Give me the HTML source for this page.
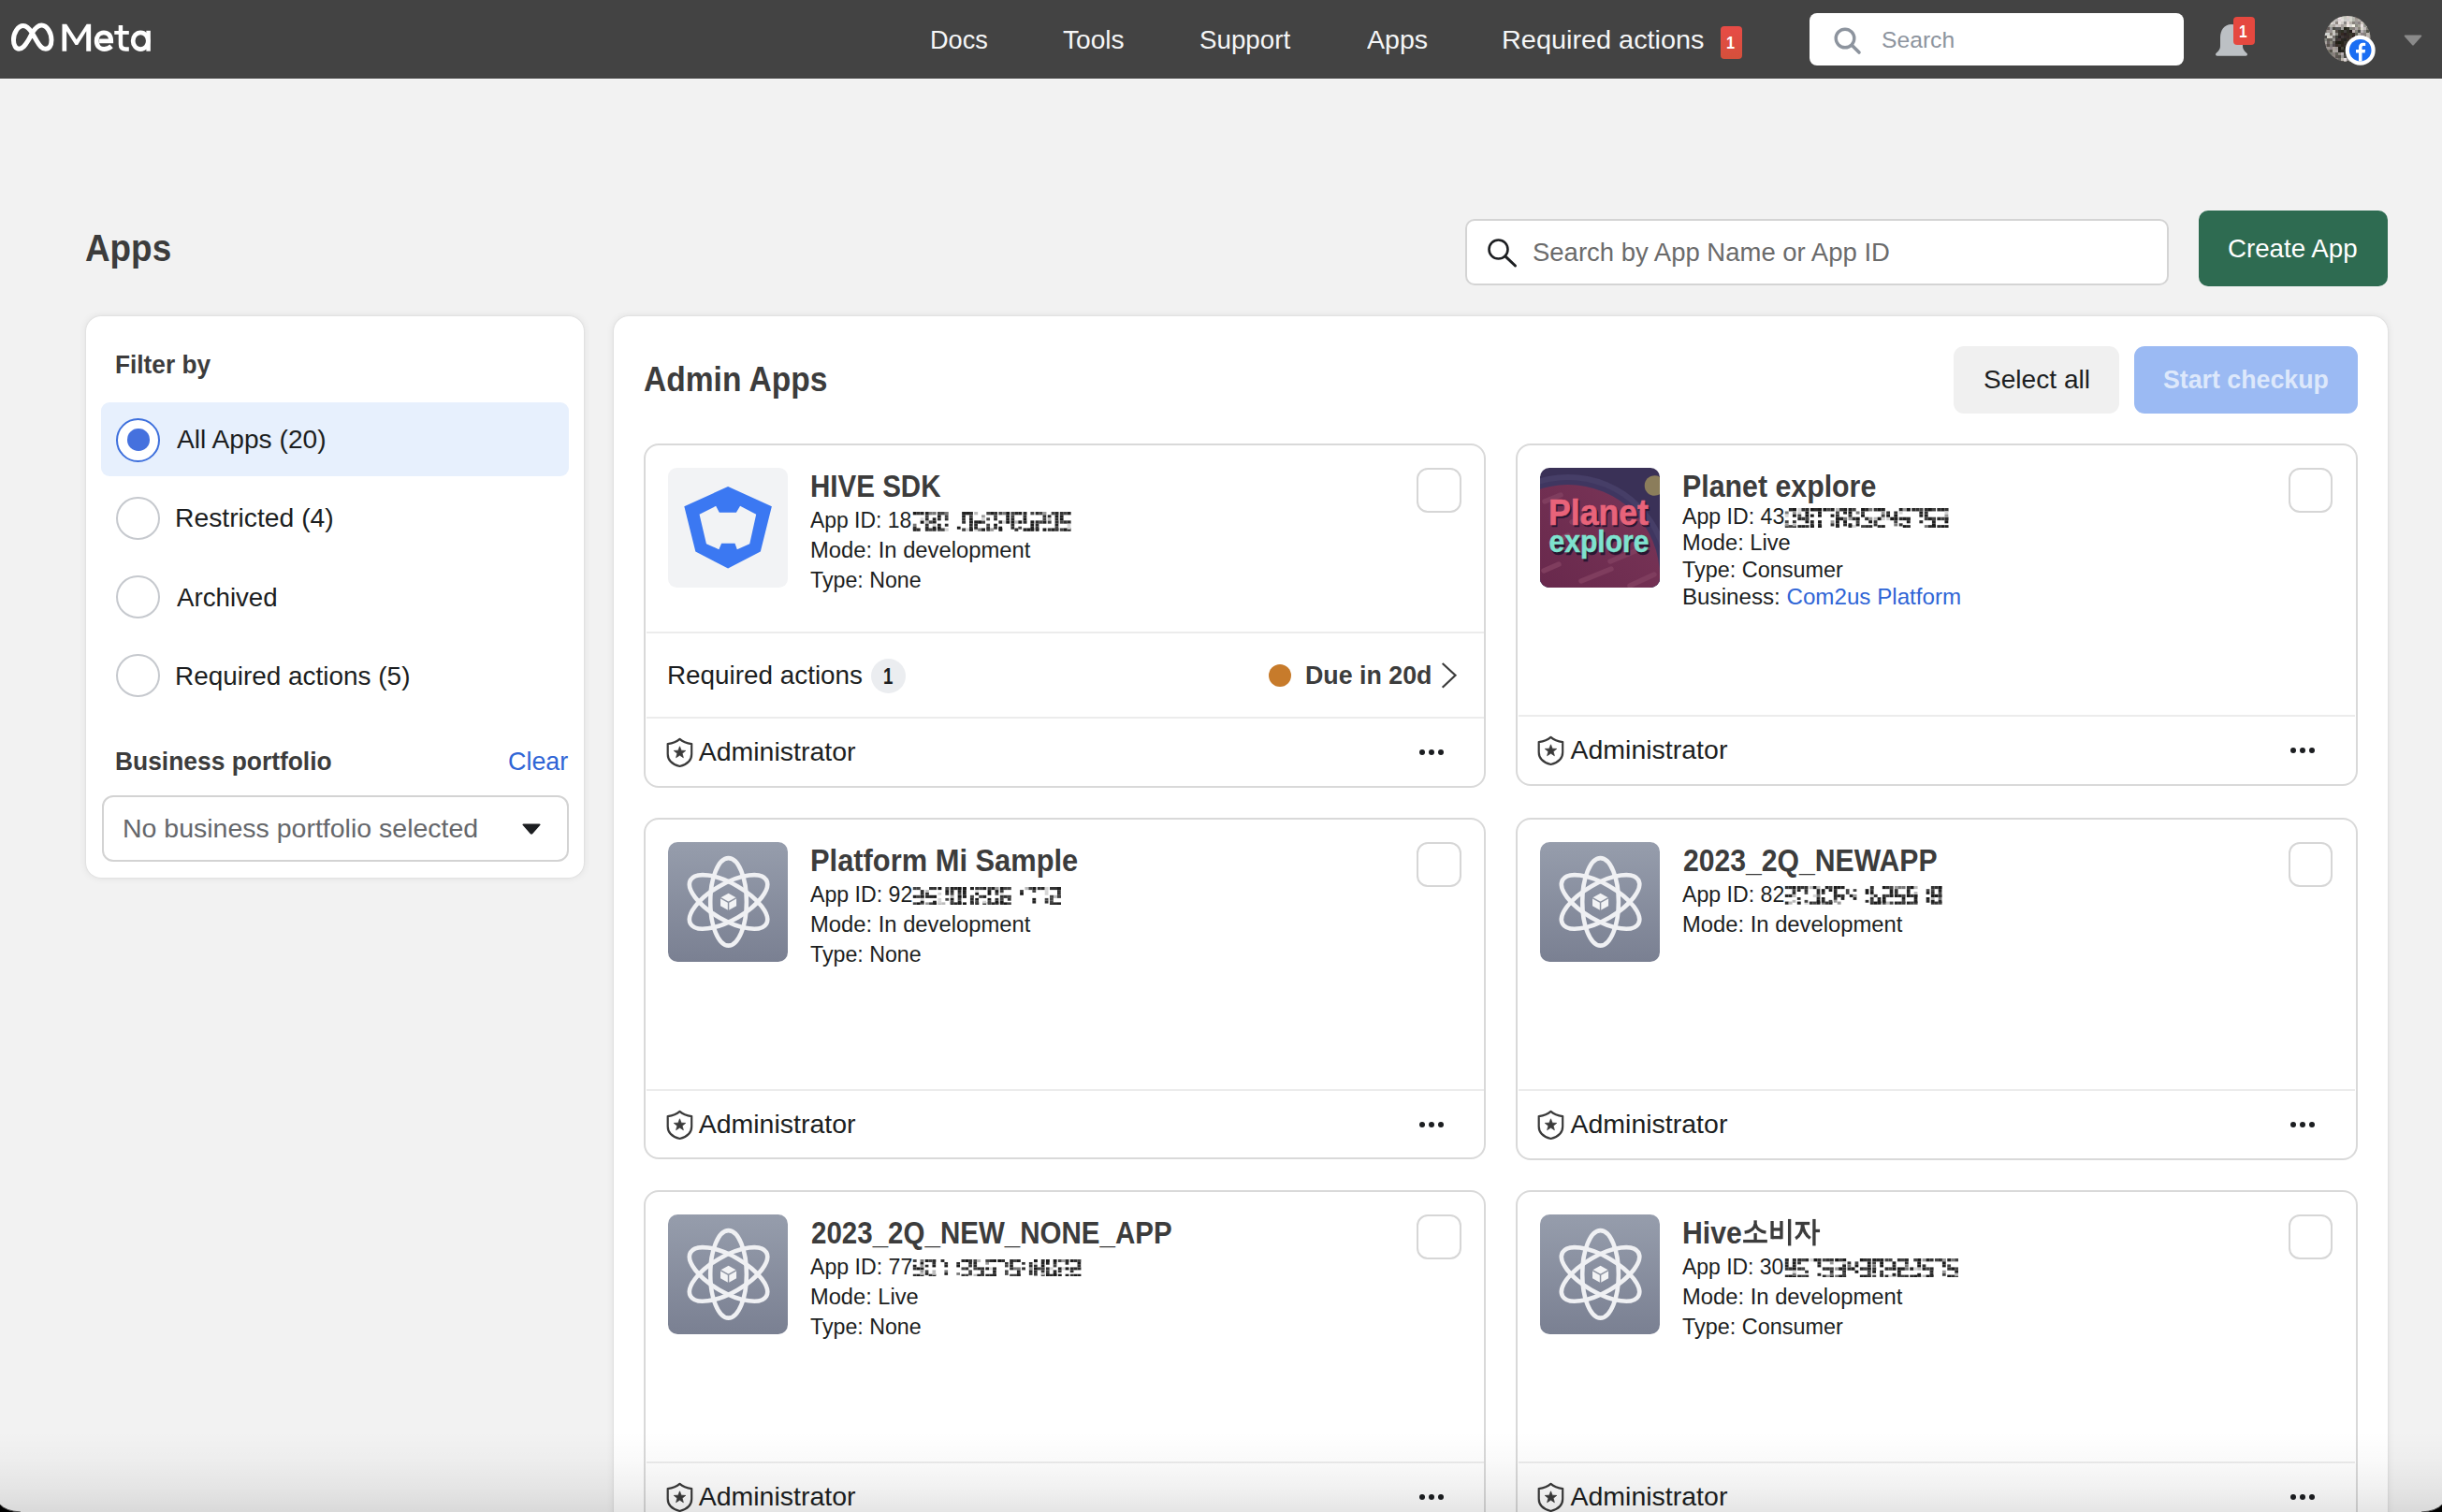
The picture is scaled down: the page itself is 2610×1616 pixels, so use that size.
<!DOCTYPE html>
<html><head><meta charset="utf-8"><title>Apps - Meta for Developers</title>
<style>
html,body{margin:0;padding:0;width:2610px;height:1616px;overflow:hidden;background:#f2f2f2;font-family:"Liberation Sans",sans-serif}
.a{position:absolute}
.t{position:absolute;white-space:nowrap;font-family:"Liberation Sans",sans-serif}
</style></head><body>
<div id='root' style='position:absolute;left:0;top:0;width:2610px;height:1616px;overflow:hidden;background:#f2f2f2'>
<div class='a' style='left:0px;top:0px;width:2610px;height:84px;background:#434343'></div>
<svg class='a' style='left:8px;top:18px' width='60' height='44' viewBox='0 0 2062 1512'>
<path d='M905 600 C800 430 700 330 580 330 C380 330 222 600 222 850 C222 1050 310 1178 420 1178 C560 1178 650 1050 760 870 C840 740 870 660 905 600 C1000 440 1110 312 1250 312 C1460 312 1615 600 1615 850 C1615 1060 1530 1178 1400 1178 C1260 1178 1180 1060 1080 890 C1000 760 960 680 905 600 Z' fill='none' stroke='#fff' stroke-width='172' stroke-linejoin='round'/>
</svg>
<svg class='a' style='left:62px;top:20px' width='104' height='40' viewBox='0 0 2442 939'>
<path d='M105 135 L215 135 L465 525 L720 135 L825 135 L825 815 L710 815 L710 310 L495 655 L435 655 L215 310 L215 815 L105 815 Z' fill='#fff'/>
<path d='M1035 560 L1330 560 C1330 415 1255 348 1150 348 C1030 348 968 445 968 557 C968 685 1045 762 1160 762 C1245 762 1300 728 1340 690' fill='none' stroke='#fff' stroke-width='115'/>
<path d='M1572 165 L1572 640 C1572 730 1620 762 1700 762 L1780 762' fill='none' stroke='#fff' stroke-width='105'/>
<path d='M1415 350 L1780 350' fill='none' stroke='#fff' stroke-width='90'/>
<ellipse cx='2072' cy='557' rx='190' ry='208' fill='none' stroke='#fff' stroke-width='112'/>
<path d='M2268 300 L2268 815' fill='none' stroke='#fff' stroke-width='105'/>
</svg>
<div class='t' style='left:993.80px;top:28.20px;font-size:28.3px;line-height:28.3px;font-weight:400;color:#f5f6f7;transform:scaleX(0.9599);transform-origin:0 0;'>Docs</div>
<div class='t' style='left:1135.91px;top:28.20px;font-size:28.3px;line-height:28.3px;font-weight:400;color:#f5f6f7;transform:scaleX(0.9937);transform-origin:0 0;'>Tools</div>
<div class='t' style='left:1281.72px;top:28.20px;font-size:28.3px;line-height:28.3px;font-weight:400;color:#f5f6f7;transform:scaleX(0.9796);transform-origin:0 0;'>Support</div>
<div class='t' style='left:1460.70px;top:28.20px;font-size:28.3px;line-height:28.3px;font-weight:400;color:#f5f6f7;transform:scaleX(1.0094);transform-origin:0 0;'>Apps</div>
<div class='t' style='left:1605.36px;top:28.20px;font-size:28.3px;line-height:28.3px;font-weight:400;color:#f5f6f7;transform:scaleX(1.0195);transform-origin:0 0;'>Required actions</div>
<div class='a' style='left:1839px;top:28px;width:23px;height:35px;background:linear-gradient(#e84b46,#d4503b);border-radius:4px'></div>
<div class='t' style='left:1844.74px;top:35.80px;font-size:19px;line-height:19px;font-weight:700;color:#fff;transform:scaleX(0.8556);transform-origin:0 0;'>1</div>
<div class='a' style='left:1934px;top:14px;width:400px;height:56px;background:#fff;border-radius:8px'></div>
<svg class='a' style='left:1956.5px;top:26px' width='36' height='36' viewBox='0 0 36 36'>
<circle cx='15' cy='15' r='9.8' fill='none' stroke='#8d949e' stroke-width='3.4'/>
<line x1='22.2' y1='22.2' x2='30' y2='30' stroke='#8d949e' stroke-width='3.6' stroke-linecap='round'/></svg>
<div class='t' style='left:2011.40px;top:30.80px;font-size:24.5px;line-height:24.5px;font-weight:400;color:#8d949e;transform:scaleX(1.0072);transform-origin:0 0;'>Search</div>
<svg class='a' style='left:2360px;top:18px' width='50' height='48' viewBox='0 0 50 48'>
<path d='M25 8 C17 8 13 14.5 13 22 L13 31 C13 35 10.5 37 8.5 39 C7.5 40 8 41.8 10 41.8 L40 41.8 C42 41.8 42.5 40 41.5 39 C39.5 37 37 35 37 31 L37 22 C37 14.5 33 8 25 8 Z' fill='#bcc0c4'/></svg>
<div class='a' style='left:2387px;top:18px;width:23px;height:30px;background:#e5483f;border-radius:4px'></div>
<div class='t' style='left:2393.38px;top:23.60px;font-size:19px;line-height:19px;font-weight:700;color:#fff;transform:scaleX(0.8222);transform-origin:0 0;'>1</div>
<svg class='a' style='left:2480px;top:14px' width='66' height='62' viewBox='0 0 66 62'><defs><clipPath id='av'><circle cx='29' cy='27.5' r='24.5'/></clipPath></defs><g clip-path='url(#av)'><rect x='0' y='0' width='60' height='60' fill='#6a625c'/><rect x='4.0' y='15.0' width='3.2' height='3.2' fill='rgb(98,98,95)'/><rect x='4.0' y='18.0' width='3.2' height='3.2' fill='rgb(129,124,117)'/><rect x='4.0' y='21.0' width='3.2' height='3.2' fill='rgb(210,211,209)'/><rect x='4.0' y='24.0' width='3.2' height='3.2' fill='rgb(78,76,74)'/><rect x='4.0' y='27.0' width='3.2' height='3.2' fill='rgb(134,138,131)'/><rect x='4.0' y='30.0' width='3.2' height='3.2' fill='rgb(169,163,158)'/><rect x='4.0' y='33.0' width='3.2' height='3.2' fill='rgb(131,123,125)'/><rect x='4.0' y='36.0' width='3.2' height='3.2' fill='rgb(165,160,155)'/><rect x='7.0' y='12.0' width='3.2' height='3.2' fill='rgb(152,150,148)'/><rect x='7.0' y='15.0' width='3.2' height='3.2' fill='rgb(99,90,88)'/><rect x='7.0' y='18.0' width='3.2' height='3.2' fill='rgb(162,154,151)'/><rect x='7.0' y='21.0' width='3.2' height='3.2' fill='rgb(208,209,206)'/><rect x='7.0' y='24.0' width='3.2' height='3.2' fill='rgb(215,212,202)'/><rect x='7.0' y='27.0' width='3.2' height='3.2' fill='rgb(95,90,84)'/><rect x='7.0' y='30.0' width='3.2' height='3.2' fill='rgb(103,96,96)'/><rect x='7.0' y='33.0' width='3.2' height='3.2' fill='rgb(88,82,75)'/><rect x='7.0' y='36.0' width='3.2' height='3.2' fill='rgb(156,149,146)'/><rect x='7.0' y='39.0' width='3.2' height='3.2' fill='rgb(118,115,105)'/><rect x='7.0' y='42.0' width='3.2' height='3.2' fill='rgb(153,150,144)'/><rect x='10.0' y='9.0' width='3.2' height='3.2' fill='rgb(226,221,216)'/><rect x='10.0' y='12.0' width='3.2' height='3.2' fill='rgb(182,182,175)'/><rect x='10.0' y='15.0' width='3.2' height='3.2' fill='rgb(153,152,153)'/><rect x='10.0' y='18.0' width='3.2' height='3.2' fill='rgb(156,150,149)'/><rect x='10.0' y='21.0' width='3.2' height='3.2' fill='rgb(129,123,114)'/><rect x='10.0' y='24.0' width='3.2' height='3.2' fill='rgb(203,200,195)'/><rect x='10.0' y='27.0' width='3.2' height='3.2' fill='rgb(105,102,95)'/><rect x='10.0' y='30.0' width='3.2' height='3.2' fill='rgb(142,140,129)'/><rect x='10.0' y='33.0' width='3.2' height='3.2' fill='rgb(126,120,119)'/><rect x='10.0' y='36.0' width='3.2' height='3.2' fill='rgb(142,132,135)'/><rect x='10.0' y='39.0' width='3.2' height='3.2' fill='rgb(86,82,74)'/><rect x='10.0' y='42.0' width='3.2' height='3.2' fill='rgb(125,126,118)'/><rect x='10.0' y='45.0' width='3.2' height='3.2' fill='rgb(153,150,142)'/><rect x='13.0' y='6.0' width='3.2' height='3.2' fill='rgb(200,197,190)'/><rect x='13.0' y='9.0' width='3.2' height='3.2' fill='rgb(202,199,197)'/><rect x='13.0' y='12.0' width='3.2' height='3.2' fill='rgb(173,165,160)'/><rect x='13.0' y='15.0' width='3.2' height='3.2' fill='rgb(74,74,68)'/><rect x='13.0' y='18.0' width='3.2' height='3.2' fill='rgb(200,199,189)'/><rect x='13.0' y='21.0' width='3.2' height='3.2' fill='rgb(202,197,194)'/><rect x='13.0' y='24.0' width='3.2' height='3.2' fill='rgb(119,115,111)'/><rect x='13.0' y='27.0' width='3.2' height='3.2' fill='rgb(151,149,146)'/><rect x='13.0' y='30.0' width='3.2' height='3.2' fill='rgb(89,84,81)'/><rect x='13.0' y='33.0' width='3.2' height='3.2' fill='rgb(80,74,76)'/><rect x='13.0' y='36.0' width='3.2' height='3.2' fill='rgb(170,160,155)'/><rect x='13.0' y='39.0' width='3.2' height='3.2' fill='rgb(170,166,158)'/><rect x='13.0' y='42.0' width='3.2' height='3.2' fill='rgb(138,128,126)'/><rect x='13.0' y='45.0' width='3.2' height='3.2' fill='rgb(143,136,129)'/><rect x='13.0' y='48.0' width='3.2' height='3.2' fill='rgb(169,166,160)'/><rect x='16.0' y='3.0' width='3.2' height='3.2' fill='rgb(220,218,207)'/><rect x='16.0' y='6.0' width='3.2' height='3.2' fill='rgb(188,186,184)'/><rect x='16.0' y='9.0' width='3.2' height='3.2' fill='rgb(143,134,129)'/><rect x='16.0' y='12.0' width='3.2' height='3.2' fill='rgb(203,199,200)'/><rect x='16.0' y='15.0' width='3.2' height='3.2' fill='rgb(88,87,87)'/><rect x='16.0' y='18.0' width='3.2' height='3.2' fill='rgb(83,75,70)'/><rect x='16.0' y='21.0' width='3.2' height='3.2' fill='rgb(134,133,127)'/><rect x='16.0' y='24.0' width='3.2' height='3.2' fill='rgb(61,62,56)'/><rect x='16.0' y='27.0' width='3.2' height='3.2' fill='rgb(61,54,54)'/><rect x='16.0' y='30.0' width='3.2' height='3.2' fill='rgb(37,32,25)'/><rect x='16.0' y='33.0' width='3.2' height='3.2' fill='rgb(58,47,41)'/><rect x='16.0' y='36.0' width='3.2' height='3.2' fill='rgb(154,149,147)'/><rect x='16.0' y='39.0' width='3.2' height='3.2' fill='rgb(168,160,160)'/><rect x='16.0' y='42.0' width='3.2' height='3.2' fill='rgb(97,98,87)'/><rect x='16.0' y='45.0' width='3.2' height='3.2' fill='rgb(93,85,83)'/><rect x='16.0' y='48.0' width='3.2' height='3.2' fill='rgb(132,126,122)'/><rect x='19.0' y='3.0' width='3.2' height='3.2' fill='rgb(241,230,233)'/><rect x='19.0' y='6.0' width='3.2' height='3.2' fill='rgb(221,209,212)'/><rect x='19.0' y='9.0' width='3.2' height='3.2' fill='rgb(229,224,220)'/><rect x='19.0' y='12.0' width='3.2' height='3.2' fill='rgb(199,191,186)'/><rect x='19.0' y='15.0' width='3.2' height='3.2' fill='rgb(87,87,85)'/><rect x='19.0' y='18.0' width='3.2' height='3.2' fill='rgb(53,52,45)'/><rect x='19.0' y='21.0' width='3.2' height='3.2' fill='rgb(60,55,50)'/><rect x='19.0' y='24.0' width='3.2' height='3.2' fill='rgb(41,36,37)'/><rect x='19.0' y='27.0' width='3.2' height='3.2' fill='rgb(70,58,57)'/><rect x='19.0' y='30.0' width='3.2' height='3.2' fill='rgb(28,31,20)'/><rect x='19.0' y='33.0' width='3.2' height='3.2' fill='rgb(60,54,50)'/><rect x='19.0' y='36.0' width='3.2' height='3.2' fill='rgb(32,27,21)'/><rect x='19.0' y='39.0' width='3.2' height='3.2' fill='rgb(32,31,28)'/><rect x='19.0' y='42.0' width='3.2' height='3.2' fill='rgb(145,138,133)'/><rect x='19.0' y='45.0' width='3.2' height='3.2' fill='rgb(86,84,75)'/><rect x='19.0' y='48.0' width='3.2' height='3.2' fill='rgb(106,104,100)'/><rect x='19.0' y='51.0' width='3.2' height='3.2' fill='rgb(109,101,93)'/><rect x='22.0' y='3.0' width='3.2' height='3.2' fill='rgb(216,215,207)'/><rect x='22.0' y='6.0' width='3.2' height='3.2' fill='rgb(227,222,219)'/><rect x='22.0' y='9.0' width='3.2' height='3.2' fill='rgb(210,206,201)'/><rect x='22.0' y='12.0' width='3.2' height='3.2' fill='rgb(165,157,155)'/><rect x='22.0' y='15.0' width='3.2' height='3.2' fill='rgb(160,158,154)'/><rect x='22.0' y='18.0' width='3.2' height='3.2' fill='rgb(45,46,35)'/><rect x='22.0' y='21.0' width='3.2' height='3.2' fill='rgb(52,40,34)'/><rect x='22.0' y='24.0' width='3.2' height='3.2' fill='rgb(64,57,58)'/><rect x='22.0' y='27.0' width='3.2' height='3.2' fill='rgb(42,38,33)'/><rect x='22.0' y='30.0' width='3.2' height='3.2' fill='rgb(38,34,25)'/><rect x='22.0' y='33.0' width='3.2' height='3.2' fill='rgb(43,37,28)'/><rect x='22.0' y='36.0' width='3.2' height='3.2' fill='rgb(69,69,58)'/><rect x='22.0' y='39.0' width='3.2' height='3.2' fill='rgb(41,38,31)'/><rect x='22.0' y='42.0' width='3.2' height='3.2' fill='rgb(182,174,178)'/><rect x='22.0' y='45.0' width='3.2' height='3.2' fill='rgb(157,155,153)'/><rect x='22.0' y='48.0' width='3.2' height='3.2' fill='rgb(191,185,175)'/><rect x='22.0' y='51.0' width='3.2' height='3.2' fill='rgb(73,69,70)'/><rect x='25.0' y='3.0' width='3.2' height='3.2' fill='rgb(199,200,190)'/><rect x='25.0' y='6.0' width='3.2' height='3.2' fill='rgb(202,202,198)'/><rect x='25.0' y='9.0' width='3.2' height='3.2' fill='rgb(139,136,135)'/><rect x='25.0' y='12.0' width='3.2' height='3.2' fill='rgb(178,174,165)'/><rect x='25.0' y='15.0' width='3.2' height='3.2' fill='rgb(36,35,25)'/><rect x='25.0' y='18.0' width='3.2' height='3.2' fill='rgb(66,63,62)'/><rect x='25.0' y='21.0' width='3.2' height='3.2' fill='rgb(42,32,34)'/><rect x='25.0' y='24.0' width='3.2' height='3.2' fill='rgb(52,45,42)'/><rect x='25.0' y='27.0' width='3.2' height='3.2' fill='rgb(36,37,35)'/><rect x='25.0' y='30.0' width='3.2' height='3.2' fill='rgb(58,54,48)'/><rect x='25.0' y='33.0' width='3.2' height='3.2' fill='rgb(51,46,44)'/><rect x='25.0' y='36.0' width='3.2' height='3.2' fill='rgb(29,28,21)'/><rect x='25.0' y='39.0' width='3.2' height='3.2' fill='rgb(43,42,37)'/><rect x='25.0' y='42.0' width='3.2' height='3.2' fill='rgb(63,61,52)'/><rect x='25.0' y='45.0' width='3.2' height='3.2' fill='rgb(78,77,75)'/><rect x='25.0' y='48.0' width='3.2' height='3.2' fill='rgb(222,214,217)'/><rect x='25.0' y='51.0' width='3.2' height='3.2' fill='rgb(186,182,175)'/><rect x='28.0' y='3.0' width='3.2' height='3.2' fill='rgb(215,204,201)'/><rect x='28.0' y='6.0' width='3.2' height='3.2' fill='rgb(206,203,203)'/><rect x='28.0' y='9.0' width='3.2' height='3.2' fill='rgb(226,216,212)'/><rect x='28.0' y='12.0' width='3.2' height='3.2' fill='rgb(241,232,228)'/><rect x='28.0' y='15.0' width='3.2' height='3.2' fill='rgb(53,53,43)'/><rect x='28.0' y='18.0' width='3.2' height='3.2' fill='rgb(46,45,37)'/><rect x='28.0' y='21.0' width='3.2' height='3.2' fill='rgb(50,45,38)'/><rect x='28.0' y='24.0' width='3.2' height='3.2' fill='rgb(51,41,40)'/><rect x='28.0' y='27.0' width='3.2' height='3.2' fill='rgb(57,49,42)'/><rect x='28.0' y='30.0' width='3.2' height='3.2' fill='rgb(65,63,53)'/><rect x='28.0' y='33.0' width='3.2' height='3.2' fill='rgb(29,25,22)'/><rect x='28.0' y='36.0' width='3.2' height='3.2' fill='rgb(57,55,45)'/><rect x='28.0' y='39.0' width='3.2' height='3.2' fill='rgb(56,57,46)'/><rect x='28.0' y='42.0' width='3.2' height='3.2' fill='rgb(36,35,27)'/><rect x='28.0' y='45.0' width='3.2' height='3.2' fill='rgb(156,154,145)'/><rect x='28.0' y='48.0' width='3.2' height='3.2' fill='rgb(152,148,147)'/><rect x='28.0' y='51.0' width='3.2' height='3.2' fill='rgb(76,75,69)'/><rect x='31.0' y='3.0' width='3.2' height='3.2' fill='rgb(209,211,202)'/><rect x='31.0' y='6.0' width='3.2' height='3.2' fill='rgb(213,212,203)'/><rect x='31.0' y='9.0' width='3.2' height='3.2' fill='rgb(184,179,171)'/><rect x='31.0' y='12.0' width='3.2' height='3.2' fill='rgb(218,215,212)'/><rect x='31.0' y='15.0' width='3.2' height='3.2' fill='rgb(128,130,119)'/><rect x='31.0' y='18.0' width='3.2' height='3.2' fill='rgb(36,27,27)'/><rect x='31.0' y='21.0' width='3.2' height='3.2' fill='rgb(56,57,44)'/><rect x='31.0' y='24.0' width='3.2' height='3.2' fill='rgb(66,59,51)'/><rect x='31.0' y='27.0' width='3.2' height='3.2' fill='rgb(72,66,56)'/><rect x='31.0' y='30.0' width='3.2' height='3.2' fill='rgb(55,56,46)'/><rect x='31.0' y='33.0' width='3.2' height='3.2' fill='rgb(44,41,33)'/><rect x='31.0' y='36.0' width='3.2' height='3.2' fill='rgb(59,56,49)'/><rect x='31.0' y='39.0' width='3.2' height='3.2' fill='rgb(33,28,25)'/><rect x='31.0' y='42.0' width='3.2' height='3.2' fill='rgb(160,159,154)'/><rect x='31.0' y='45.0' width='3.2' height='3.2' fill='rgb(107,104,99)'/><rect x='31.0' y='48.0' width='3.2' height='3.2' fill='rgb(112,106,103)'/><rect x='31.0' y='51.0' width='3.2' height='3.2' fill='rgb(179,178,167)'/><rect x='34.0' y='3.0' width='3.2' height='3.2' fill='rgb(183,182,177)'/><rect x='34.0' y='6.0' width='3.2' height='3.2' fill='rgb(179,181,172)'/><rect x='34.0' y='9.0' width='3.2' height='3.2' fill='rgb(135,130,124)'/><rect x='34.0' y='12.0' width='3.2' height='3.2' fill='rgb(245,243,231)'/><rect x='34.0' y='15.0' width='3.2' height='3.2' fill='rgb(133,125,122)'/><rect x='34.0' y='18.0' width='3.2' height='3.2' fill='rgb(188,177,175)'/><rect x='34.0' y='21.0' width='3.2' height='3.2' fill='rgb(52,44,39)'/><rect x='34.0' y='24.0' width='3.2' height='3.2' fill='rgb(41,29,27)'/><rect x='34.0' y='27.0' width='3.2' height='3.2' fill='rgb(62,59,52)'/><rect x='34.0' y='30.0' width='3.2' height='3.2' fill='rgb(54,55,50)'/><rect x='34.0' y='33.0' width='3.2' height='3.2' fill='rgb(32,30,23)'/><rect x='34.0' y='36.0' width='3.2' height='3.2' fill='rgb(45,39,33)'/><rect x='34.0' y='39.0' width='3.2' height='3.2' fill='rgb(171,169,163)'/><rect x='34.0' y='42.0' width='3.2' height='3.2' fill='rgb(97,86,82)'/><rect x='34.0' y='45.0' width='3.2' height='3.2' fill='rgb(88,82,73)'/><rect x='34.0' y='48.0' width='3.2' height='3.2' fill='rgb(87,83,84)'/><rect x='34.0' y='51.0' width='3.2' height='3.2' fill='rgb(121,119,118)'/><rect x='37.0' y='3.0' width='3.2' height='3.2' fill='rgb(153,143,137)'/><rect x='37.0' y='6.0' width='3.2' height='3.2' fill='rgb(164,157,152)'/><rect x='37.0' y='9.0' width='3.2' height='3.2' fill='rgb(152,149,147)'/><rect x='37.0' y='12.0' width='3.2' height='3.2' fill='rgb(143,143,134)'/><rect x='37.0' y='15.0' width='3.2' height='3.2' fill='rgb(172,165,165)'/><rect x='37.0' y='18.0' width='3.2' height='3.2' fill='rgb(133,132,122)'/><rect x='37.0' y='21.0' width='3.2' height='3.2' fill='rgb(100,101,92)'/><rect x='37.0' y='24.0' width='3.2' height='3.2' fill='rgb(184,176,171)'/><rect x='37.0' y='27.0' width='3.2' height='3.2' fill='rgb(157,159,150)'/><rect x='37.0' y='30.0' width='3.2' height='3.2' fill='rgb(103,98,87)'/><rect x='37.0' y='33.0' width='3.2' height='3.2' fill='rgb(189,189,185)'/><rect x='37.0' y='36.0' width='3.2' height='3.2' fill='rgb(207,207,196)'/><rect x='37.0' y='39.0' width='3.2' height='3.2' fill='rgb(195,189,184)'/><rect x='37.0' y='42.0' width='3.2' height='3.2' fill='rgb(133,132,125)'/><rect x='37.0' y='45.0' width='3.2' height='3.2' fill='rgb(139,134,127)'/><rect x='37.0' y='48.0' width='3.2' height='3.2' fill='rgb(84,78,75)'/><rect x='40.0' y='3.0' width='3.2' height='3.2' fill='rgb(195,193,188)'/><rect x='40.0' y='6.0' width='3.2' height='3.2' fill='rgb(177,173,165)'/><rect x='40.0' y='9.0' width='3.2' height='3.2' fill='rgb(139,130,130)'/><rect x='40.0' y='12.0' width='3.2' height='3.2' fill='rgb(166,163,152)'/><rect x='40.0' y='15.0' width='3.2' height='3.2' fill='rgb(138,134,124)'/><rect x='40.0' y='18.0' width='3.2' height='3.2' fill='rgb(75,74,71)'/><rect x='40.0' y='21.0' width='3.2' height='3.2' fill='rgb(176,173,163)'/><rect x='40.0' y='24.0' width='3.2' height='3.2' fill='rgb(223,221,210)'/><rect x='40.0' y='27.0' width='3.2' height='3.2' fill='rgb(210,207,197)'/><rect x='40.0' y='30.0' width='3.2' height='3.2' fill='rgb(159,157,150)'/><rect x='40.0' y='33.0' width='3.2' height='3.2' fill='rgb(152,147,147)'/><rect x='40.0' y='36.0' width='3.2' height='3.2' fill='rgb(124,116,111)'/><rect x='40.0' y='39.0' width='3.2' height='3.2' fill='rgb(120,116,110)'/><rect x='40.0' y='42.0' width='3.2' height='3.2' fill='rgb(148,140,139)'/><rect x='40.0' y='45.0' width='3.2' height='3.2' fill='rgb(123,118,114)'/><rect x='40.0' y='48.0' width='3.2' height='3.2' fill='rgb(119,111,107)'/><rect x='43.0' y='6.0' width='3.2' height='3.2' fill='rgb(150,142,146)'/><rect x='43.0' y='9.0' width='3.2' height='3.2' fill='rgb(204,198,190)'/><rect x='43.0' y='12.0' width='3.2' height='3.2' fill='rgb(233,223,226)'/><rect x='43.0' y='15.0' width='3.2' height='3.2' fill='rgb(220,219,209)'/><rect x='43.0' y='18.0' width='3.2' height='3.2' fill='rgb(187,180,182)'/><rect x='43.0' y='21.0' width='3.2' height='3.2' fill='rgb(141,131,133)'/><rect x='43.0' y='24.0' width='3.2' height='3.2' fill='rgb(179,169,163)'/><rect x='43.0' y='27.0' width='3.2' height='3.2' fill='rgb(85,81,74)'/><rect x='43.0' y='30.0' width='3.2' height='3.2' fill='rgb(148,146,146)'/><rect x='43.0' y='33.0' width='3.2' height='3.2' fill='rgb(218,211,204)'/><rect x='43.0' y='36.0' width='3.2' height='3.2' fill='rgb(174,170,163)'/><rect x='43.0' y='39.0' width='3.2' height='3.2' fill='rgb(226,220,211)'/><rect x='43.0' y='42.0' width='3.2' height='3.2' fill='rgb(86,84,75)'/><rect x='43.0' y='45.0' width='3.2' height='3.2' fill='rgb(128,121,122)'/><rect x='46.0' y='9.0' width='3.2' height='3.2' fill='rgb(162,164,159)'/><rect x='46.0' y='12.0' width='3.2' height='3.2' fill='rgb(150,152,143)'/><rect x='46.0' y='15.0' width='3.2' height='3.2' fill='rgb(194,186,187)'/><rect x='46.0' y='18.0' width='3.2' height='3.2' fill='rgb(147,146,142)'/><rect x='46.0' y='21.0' width='3.2' height='3.2' fill='rgb(133,128,123)'/><rect x='46.0' y='24.0' width='3.2' height='3.2' fill='rgb(107,98,89)'/><rect x='46.0' y='27.0' width='3.2' height='3.2' fill='rgb(112,106,107)'/><rect x='46.0' y='30.0' width='3.2' height='3.2' fill='rgb(87,85,76)'/><rect x='46.0' y='33.0' width='3.2' height='3.2' fill='rgb(219,218,214)'/><rect x='46.0' y='36.0' width='3.2' height='3.2' fill='rgb(193,191,185)'/><rect x='46.0' y='39.0' width='3.2' height='3.2' fill='rgb(206,201,191)'/><rect x='46.0' y='42.0' width='3.2' height='3.2' fill='rgb(90,92,85)'/><rect x='49.0' y='12.0' width='3.2' height='3.2' fill='rgb(211,203,206)'/><rect x='49.0' y='15.0' width='3.2' height='3.2' fill='rgb(128,128,119)'/><rect x='49.0' y='18.0' width='3.2' height='3.2' fill='rgb(82,83,72)'/><rect x='49.0' y='21.0' width='3.2' height='3.2' fill='rgb(187,181,174)'/><rect x='49.0' y='24.0' width='3.2' height='3.2' fill='rgb(188,178,174)'/><rect x='49.0' y='27.0' width='3.2' height='3.2' fill='rgb(165,160,154)'/><rect x='49.0' y='30.0' width='3.2' height='3.2' fill='rgb(98,97,90)'/><rect x='49.0' y='33.0' width='3.2' height='3.2' fill='rgb(200,198,188)'/><rect x='49.0' y='36.0' width='3.2' height='3.2' fill='rgb(86,76,74)'/><rect x='49.0' y='39.0' width='3.2' height='3.2' fill='rgb(139,131,128)'/><rect x='52.0' y='18.0' width='3.2' height='3.2' fill='rgb(201,205,194)'/><rect x='52.0' y='21.0' width='3.2' height='3.2' fill='rgb(175,174,167)'/><rect x='52.0' y='24.0' width='3.2' height='3.2' fill='rgb(169,165,162)'/><rect x='52.0' y='27.0' width='3.2' height='3.2' fill='rgb(126,126,120)'/><rect x='52.0' y='30.0' width='3.2' height='3.2' fill='rgb(150,146,142)'/><rect x='52.0' y='33.0' width='3.2' height='3.2' fill='rgb(80,75,73)'/><rect x='52.0' y='36.0' width='3.2' height='3.2' fill='rgb(211,215,205)'/></g><circle cx='42.7' cy='39.7' r='16' fill='#fff'/><circle cx='42.7' cy='39.7' r='11.8' fill='#1b6ef3'/><path d='M44.5 51.5 L44.5 42.5 L47.6 42.5 L48.1 39 L44.5 39 L44.5 36.8 C44.5 35.8 44.9 35.1 46.3 35.1 L48.2 35.1 L48.2 32 C47.8 31.9 46.7 31.8 45.6 31.8 C42.8 31.8 41 33.5 41 36.5 L41 39 L38 39 L38 42.5 L41 42.5 L41 51.5 Z' fill='#fff'/></svg>
<svg class='a' style='left:2568px;top:35px' width='22' height='16' viewBox='0 0 22 16'>
<path d='M2.5 2.5 L19.5 2.5 Q21 2.5 20 4 L12 13 Q11 14 10 13 L2 4 Q1 2.5 2.5 2.5 Z' fill='#8a8a8a'/></svg>
<div class='t' style='left:91.19px;top:244.70px;font-size:40.6px;line-height:40.6px;font-weight:700;color:#3c3c3c;transform:scaleX(0.9081);transform-origin:0 0;'>Apps</div>
<div class='a' style='left:1566px;top:234px;width:752px;height:71px;background:#fff;border:2px solid #d4d4d4;border-radius:10px;box-sizing:border-box'></div>
<svg class='a' style='left:1586px;top:252px' width='40' height='36' viewBox='0 0 40 36'>
<circle cx='15.5' cy='14.5' r='10' fill='none' stroke='#1c1e21' stroke-width='2.6'/>
<line x1='22.8' y1='21.8' x2='33.5' y2='32' stroke='#1c1e21' stroke-width='3' stroke-linecap='round'/></svg>
<div class='t' style='left:1637.64px;top:254.70px;font-size:28.5px;line-height:28.5px;font-weight:400;color:#6b6b6b;transform:scaleX(0.9642);transform-origin:0 0;'>Search by App Name or App ID</div>
<div class='a' style='left:2350px;top:225px;width:202px;height:81px;background:#2e6b51;border-radius:10px'></div>
<div class='t' style='left:2381.03px;top:251.00px;font-size:28.5px;line-height:28.5px;font-weight:400;color:#ffffff;transform:scaleX(0.9716);transform-origin:0 0;'>Create App</div>
<div class='a' style='left:92px;top:338px;width:532px;height:600px;background:#fff;border-radius:16px;box-shadow:0 0 9px rgba(0,0,0,0.09),0 0 2px rgba(0,0,0,0.10)'></div>
<div class='t' style='left:122.86px;top:374.90px;font-size:28.5px;line-height:28.5px;font-weight:700;color:#3c3c3c;transform:scaleX(0.9211);transform-origin:0 0;'>Filter by</div>
<div class='a' style='left:108px;top:430px;width:500px;height:79px;background:#e7f0fd;border-radius:9px'></div>
<div class='a' style='left:124px;top:446.5px;width:47px;height:47px;border-radius:50%;border:2.6px solid #3d6fdc;box-sizing:border-box;background:#fff'></div>
<div class='a' style='left:136px;top:458.2px;width:23.6px;height:23.6px;border-radius:50%;background:#4571de'></div>
<div class='a' style='left:124.3px;top:530.5px;width:46.6px;height:46.6px;border-radius:50%;border:2.2px solid #c6c9ce;box-sizing:border-box;background:#fff'></div>
<div class='a' style='left:124.3px;top:614.5px;width:46.6px;height:46.6px;border-radius:50%;border:2.2px solid #c6c9ce;box-sizing:border-box;background:#fff'></div>
<div class='a' style='left:124.3px;top:698.5px;width:46.6px;height:46.6px;border-radius:50%;border:2.2px solid #c6c9ce;box-sizing:border-box;background:#fff'></div>
<div class='t' style='left:189.00px;top:455.00px;font-size:28.5px;line-height:28.5px;font-weight:400;color:#1c1e21;transform:scaleX(0.9875);transform-origin:0 0;'>All Apps (20)</div>
<div class='t' style='left:187.32px;top:539.30px;font-size:28.5px;line-height:28.5px;font-weight:400;color:#1c1e21;transform:scaleX(0.9922);transform-origin:0 0;'>Restricted (4)</div>
<div class='t' style='left:189.30px;top:624.10px;font-size:28.5px;line-height:28.5px;font-weight:400;color:#1c1e21;transform:scaleX(0.9706);transform-origin:0 0;'>Archived</div>
<div class='t' style='left:187.34px;top:708.10px;font-size:28.5px;line-height:28.5px;font-weight:400;color:#1c1e21;transform:scaleX(0.9798);transform-origin:0 0;'>Required actions (5)</div>
<div class='t' style='left:122.95px;top:799.00px;font-size:28.5px;line-height:28.5px;font-weight:700;color:#3c3c3c;transform:scaleX(0.9259);transform-origin:0 0;'>Business portfolio</div>
<div class='t' style='left:543.36px;top:799.00px;font-size:28.5px;line-height:28.5px;font-weight:400;color:#2f65d6;transform:scaleX(0.9433);transform-origin:0 0;'>Clear</div>
<div class='a' style='left:109px;top:850px;width:499px;height:71px;background:#fff;border:2px solid #d3d3d3;border-radius:12px;box-sizing:border-box'></div>
<div class='t' style='left:130.99px;top:871.40px;font-size:28.5px;line-height:28.5px;font-weight:400;color:#65676b;'>No business portfolio selected</div>
<svg class='a' style='left:556px;top:878px' width='24' height='16' viewBox='0 0 24 16'>
<path d='M3.5 2.5 L20.5 2.5 Q22.5 2.5 21 4.3 L13.3 13 Q12 14.5 10.7 13 L3 4.3 Q1.5 2.5 3.5 2.5 Z' fill='#1c1e21'/></svg>
<div class='a' style='left:656px;top:338px;width:1896px;height:1362px;background:#fff;border-radius:16px;box-shadow:0 0 9px rgba(0,0,0,0.09),0 0 2px rgba(0,0,0,0.10)'></div>
<div class='t' style='left:687.98px;top:387.80px;font-size:36.6px;line-height:36.6px;font-weight:700;color:#3c3c3c;transform:scaleX(0.9175);transform-origin:0 0;'>Admin Apps</div>
<div class='a' style='left:2088px;top:370px;width:177px;height:72px;background:#f0f0f0;border-radius:11px'></div>
<div class='t' style='left:2119.61px;top:390.80px;font-size:28.5px;line-height:28.5px;font-weight:400;color:#1c1e21;transform:scaleX(0.9858);transform-origin:0 0;'>Select all</div>
<div class='a' style='left:2281px;top:370px;width:239px;height:72px;background:#9bbaf3;border-radius:11px'></div>
<div class='t' style='left:2311.56px;top:390.90px;font-size:28.5px;line-height:28.5px;font-weight:700;color:#dde8fb;transform:scaleX(0.9382);transform-origin:0 0;'>Start checkup</div>
<div class='a' style='left:688px;top:473.8px;width:900.1999999999998px;height:367.99999999999994px;background:#fff;border:2px solid #d9d9d9;border-radius:16px;box-sizing:border-box'></div>
<svg class='a' style='left:714px;top:500px' width='128' height='128' viewBox='43 55 1382 1380'>
<rect x='43' y='55' width='1382' height='1380' rx='100' fill='#f2f3f5'/>
<path fill='#3b78f2' fill-rule='evenodd' d='M735 270 L1240 500 L1110 1020 L735 1215 L360 1020 L230 500 Z M405 590 L595 495 L635 570 L830 570 L875 495 L1060 590 L985 930 L840 995 L815 925 L660 925 L630 995 L485 930 Z'/>
</svg>
<div class='t' style='left:866.28px;top:503.80px;font-size:32.5px;line-height:32.5px;font-weight:700;color:#3c3c3c;transform:scaleX(0.9086);transform-origin:0 0;'>HIVE SDK</div>
<div class='t' style='left:866.40px;top:543.80px;font-size:24.4px;line-height:24.4px;font-weight:400;color:#1c1e21;transform:scaleX(0.9386);transform-origin:0 0;'>App ID: 18</div>
<div class='t' style='left:866.25px;top:575.90px;font-size:24.4px;line-height:24.4px;font-weight:400;color:#1c1e21;transform:scaleX(0.9749);transform-origin:0 0;'>Mode: In development</div>
<div class='t' style='left:866.40px;top:608.00px;font-size:24.4px;line-height:24.4px;font-weight:400;color:#1c1e21;transform:scaleX(0.9508);transform-origin:0 0;'>Type: None</div>
<div class='a' style='left:1514.1px;top:500px;width:47.799999999999955px;height:48px;border:2px solid #d6d6d6;border-radius:12px;box-sizing:border-box;background:#fff'></div>
<div class='a' style='left:691px;top:675px;width:894.5999999999999px;height:2px;background:#ececec'></div>
<div class='t' style='left:713.05px;top:706.70px;font-size:28.5px;line-height:28.5px;font-weight:400;color:#1c1e21;transform:scaleX(0.9773);transform-origin:0 0;'>Required actions</div>
<div class='a' style='left:931px;top:703.5px;width:37px;height:37px;border-radius:50%;background:#ebedf0'></div>
<div class='t' style='left:943.69px;top:711.70px;font-size:23px;line-height:23px;font-weight:700;color:#1c1e21;transform:scaleX(0.8091);transform-origin:0 0;'>1</div>
<div class='a' style='left:1356px;top:710px;width:24px;height:24px;border-radius:50%;background:#c77b2b'></div>
<div class='t' style='left:1395.42px;top:707.00px;font-size:28.5px;line-height:28.5px;font-weight:700;color:#3c3c3c;transform:scaleX(0.9400);transform-origin:0 0;'>Due in 20d</div>
<svg class='a' style='left:1538px;top:706px' width='22' height='32' viewBox='0 0 22 32'><path d='M3.7 3 L17.5 15.8 L3.7 28.7' fill='none' stroke='#3c3c3c' stroke-width='2.2' stroke-linejoin='miter'/></svg>
<div class='a' style='left:691px;top:766px;width:894.5999999999999px;height:2px;background:#ececec'></div>
<svg class='a' style='left:710.5px;top:787.5px' width='32' height='36' viewBox='0 0 32 36'>
<path d='M15.5 1.8 C12.3 4.6 8.5 6.2 2.7 7.1 L2.7 17.9 C2.7 25 8 29 15.5 31 C23 29 28.2 25 28.2 17.9 L28.2 7.1 C22.5 6.2 18.7 4.6 15.5 1.8 Z' fill='none' stroke='#3a3a3a' stroke-width='2.2' stroke-linejoin='round'/>
<path d='M15.5 9.8 L17.15 14.13 L21.78 14.36 L18.16 17.27 L19.38 21.74 L15.5 19.2 L11.62 21.74 L12.84 17.27 L9.22 14.36 L13.85 14.13 Z' fill='#3a3a3a' stroke='#3a3a3a' stroke-width='0.7' stroke-linejoin='round'/>
</svg>
<div class='t' style='left:746.70px;top:788.75px;font-size:28.5px;line-height:28.5px;font-weight:400;color:#1c1e21;'>Administrator</div>
<div class='a' style='left:1516.8px;top:800.6px;width:6.2px;height:6.2px;border-radius:50%;background:#1c1e21'></div>
<div class='a' style='left:1526.8px;top:800.6px;width:6.2px;height:6.2px;border-radius:50%;background:#1c1e21'></div>
<div class='a' style='left:1536.8px;top:800.6px;width:6.2px;height:6.2px;border-radius:50%;background:#1c1e21'></div>
<svg class='a' style='left:974.9px;top:546.8px' width='170.1' height='20.8'><rect x='0.80' y='0.00' width='3.93' height='3.33' fill='#1a1a1a'/><rect x='4.73' y='0.00' width='3.93' height='3.33' fill='#333'/><rect x='8.65' y='0.00' width='3.93' height='3.33' fill='#222'/><rect x='8.65' y='9.36' width='3.93' height='3.33' fill='#1a1a1a'/><rect x='0.80' y='17.47' width='3.93' height='3.33' fill='#222'/><rect x='4.73' y='17.47' width='3.93' height='3.33' fill='#2b2b2b'/><rect x='8.65' y='6.34' width='3.73' height='3.02' fill='#d5d5d5'/><rect x='0.80' y='12.69' width='3.73' height='3.02' fill='#777'/><rect x='0.80' y='15.70' width='3.73' height='3.02' fill='#333'/><rect x='13.88' y='0.00' width='3.93' height='3.33' fill='#222'/><rect x='17.81' y='0.00' width='3.93' height='3.33' fill='#777'/><rect x='21.74' y='0.00' width='3.93' height='3.33' fill='#777'/><rect x='13.88' y='9.36' width='3.93' height='3.33' fill='#bbb'/><rect x='17.81' y='9.36' width='3.93' height='3.33' fill='#444'/><rect x='21.74' y='9.36' width='3.93' height='3.33' fill='#222'/><rect x='13.88' y='17.47' width='3.93' height='3.33' fill='#333'/><rect x='17.81' y='17.47' width='3.93' height='3.33' fill='#444'/><rect x='21.74' y='17.47' width='3.93' height='3.33' fill='#333'/><rect x='13.88' y='3.33' width='3.73' height='3.02' fill='#444'/><rect x='13.88' y='6.34' width='3.73' height='3.02' fill='#2b2b2b'/><rect x='21.74' y='6.34' width='3.73' height='3.02' fill='#222'/><rect x='13.88' y='12.69' width='3.73' height='3.02' fill='#333'/><rect x='13.88' y='15.70' width='3.73' height='3.02' fill='#2b2b2b'/><rect x='21.74' y='12.69' width='3.73' height='3.02' fill='#d5d5d5'/><rect x='21.74' y='15.70' width='3.73' height='3.02' fill='#222'/><rect x='26.97' y='0.00' width='3.93' height='3.33' fill='#444'/><rect x='30.89' y='0.00' width='3.93' height='3.33' fill='#444'/><rect x='34.82' y='0.00' width='3.93' height='3.33' fill='#777'/><rect x='26.97' y='17.47' width='3.93' height='3.33' fill='#444'/><rect x='30.89' y='17.47' width='3.93' height='3.33' fill='#444'/><rect x='34.82' y='17.47' width='3.93' height='3.33' fill='#d5d5d5'/><rect x='26.97' y='3.33' width='3.73' height='3.02' fill='#222'/><rect x='26.97' y='6.34' width='3.73' height='3.02' fill='#2b2b2b'/><rect x='34.82' y='3.33' width='3.73' height='3.02' fill='#444'/><rect x='34.82' y='6.34' width='3.73' height='3.02' fill='#333'/><rect x='26.97' y='12.69' width='3.73' height='3.02' fill='#222'/><rect x='26.97' y='15.70' width='3.73' height='3.02' fill='#1a1a1a'/><rect x='34.82' y='12.69' width='3.73' height='3.02' fill='#2b2b2b'/><rect x='47.90' y='15.70' width='3.73' height='3.02' fill='#1a1a1a'/><rect x='53.14' y='0.00' width='3.93' height='3.33' fill='#222'/><rect x='57.06' y='0.00' width='3.93' height='3.33' fill='#222'/><rect x='60.99' y='0.00' width='3.93' height='3.33' fill='#2b2b2b'/><rect x='53.14' y='9.36' width='3.93' height='3.33' fill='#333'/><rect x='60.99' y='9.36' width='3.93' height='3.33' fill='#222'/><rect x='53.14' y='17.47' width='3.93' height='3.33' fill='#444'/><rect x='57.06' y='17.47' width='3.93' height='3.33' fill='#d5d5d5'/><rect x='60.99' y='17.47' width='3.93' height='3.33' fill='#1a1a1a'/><rect x='53.14' y='3.33' width='3.73' height='3.02' fill='#222'/><rect x='53.14' y='6.34' width='3.73' height='3.02' fill='#333'/><rect x='60.99' y='3.33' width='3.73' height='3.02' fill='#444'/><rect x='60.99' y='6.34' width='3.73' height='3.02' fill='#1a1a1a'/><rect x='60.99' y='12.69' width='3.73' height='3.02' fill='#2b2b2b'/><rect x='60.99' y='15.70' width='3.73' height='3.02' fill='#2b2b2b'/><rect x='66.22' y='0.00' width='3.93' height='3.33' fill='#bbb'/><rect x='66.22' y='9.36' width='3.93' height='3.33' fill='#222'/><rect x='70.15' y='9.36' width='3.93' height='3.33' fill='#1a1a1a'/><rect x='74.07' y='9.36' width='3.93' height='3.33' fill='#444'/><rect x='66.22' y='17.47' width='3.93' height='3.33' fill='#d5d5d5'/><rect x='70.15' y='17.47' width='3.93' height='3.33' fill='#777'/><rect x='74.07' y='17.47' width='3.93' height='3.33' fill='#222'/><rect x='74.07' y='3.33' width='3.73' height='3.02' fill='#999'/><rect x='74.07' y='6.34' width='3.73' height='3.02' fill='#d5d5d5'/><rect x='66.22' y='12.69' width='3.73' height='3.02' fill='#2b2b2b'/><rect x='66.22' y='15.70' width='3.73' height='3.02' fill='#2b2b2b'/><rect x='79.31' y='0.00' width='3.93' height='3.33' fill='#444'/><rect x='83.23' y='0.00' width='3.93' height='3.33' fill='#222'/><rect x='87.16' y='0.00' width='3.93' height='3.33' fill='#333'/><rect x='79.31' y='17.47' width='3.93' height='3.33' fill='#444'/><rect x='83.23' y='17.47' width='3.93' height='3.33' fill='#999'/><rect x='79.31' y='6.34' width='3.73' height='3.02' fill='#444'/><rect x='87.16' y='3.33' width='3.73' height='3.02' fill='#444'/><rect x='87.16' y='6.34' width='3.73' height='3.02' fill='#2b2b2b'/><rect x='79.31' y='12.69' width='3.73' height='3.02' fill='#444'/><rect x='79.31' y='15.70' width='3.73' height='3.02' fill='#333'/><rect x='87.16' y='12.69' width='3.73' height='3.02' fill='#1a1a1a'/><rect x='87.16' y='15.70' width='3.73' height='3.02' fill='#333'/><rect x='92.39' y='0.00' width='3.93' height='3.33' fill='#444'/><rect x='96.32' y='0.00' width='3.93' height='3.33' fill='#777'/><rect x='100.24' y='0.00' width='3.93' height='3.33' fill='#1a1a1a'/><rect x='92.39' y='9.36' width='3.93' height='3.33' fill='#2b2b2b'/><rect x='96.32' y='9.36' width='3.93' height='3.33' fill='#d5d5d5'/><rect x='100.24' y='9.36' width='3.93' height='3.33' fill='#1a1a1a'/><rect x='92.39' y='17.47' width='3.93' height='3.33' fill='#1a1a1a'/><rect x='100.24' y='3.33' width='3.73' height='3.02' fill='#222'/><rect x='100.24' y='6.34' width='3.73' height='3.02' fill='#222'/><rect x='92.39' y='15.70' width='3.73' height='3.02' fill='#1a1a1a'/><rect x='105.48' y='0.00' width='3.93' height='3.33' fill='#444'/><rect x='109.40' y='0.00' width='3.93' height='3.33' fill='#2b2b2b'/><rect x='113.33' y='0.00' width='3.93' height='3.33' fill='#222'/><rect x='105.48' y='9.36' width='3.93' height='3.33' fill='#1a1a1a'/><rect x='109.40' y='9.36' width='3.93' height='3.33' fill='#bbb'/><rect x='113.33' y='9.36' width='3.93' height='3.33' fill='#1a1a1a'/><rect x='109.40' y='17.47' width='3.93' height='3.33' fill='#333'/><rect x='105.48' y='3.33' width='3.73' height='3.02' fill='#444'/><rect x='105.48' y='6.34' width='3.73' height='3.02' fill='#2b2b2b'/><rect x='105.48' y='12.69' width='3.73' height='3.02' fill='#2b2b2b'/><rect x='105.48' y='15.70' width='3.73' height='3.02' fill='#2b2b2b'/><rect x='113.33' y='15.70' width='3.73' height='3.02' fill='#444'/><rect x='118.56' y='0.00' width='3.93' height='3.33' fill='#2b2b2b'/><rect x='126.41' y='0.00' width='3.93' height='3.33' fill='#444'/><rect x='118.56' y='9.36' width='3.93' height='3.33' fill='#2b2b2b'/><rect x='126.41' y='9.36' width='3.93' height='3.33' fill='#1a1a1a'/><rect x='118.56' y='17.47' width='3.93' height='3.33' fill='#222'/><rect x='122.49' y='17.47' width='3.93' height='3.33' fill='#1a1a1a'/><rect x='126.41' y='17.47' width='3.93' height='3.33' fill='#1a1a1a'/><rect x='118.56' y='3.33' width='3.73' height='3.02' fill='#333'/><rect x='118.56' y='6.34' width='3.73' height='3.02' fill='#1a1a1a'/><rect x='126.41' y='12.69' width='3.73' height='3.02' fill='#1a1a1a'/><rect x='126.41' y='15.70' width='3.73' height='3.02' fill='#222'/><rect x='131.65' y='0.00' width='3.93' height='3.33' fill='#2b2b2b'/><rect x='135.57' y='0.00' width='3.93' height='3.33' fill='#444'/><rect x='139.50' y='0.00' width='3.93' height='3.33' fill='#999'/><rect x='131.65' y='9.36' width='3.93' height='3.33' fill='#2b2b2b'/><rect x='135.57' y='9.36' width='3.93' height='3.33' fill='#444'/><rect x='139.50' y='9.36' width='3.93' height='3.33' fill='#222'/><rect x='131.65' y='17.47' width='3.93' height='3.33' fill='#222'/><rect x='139.50' y='17.47' width='3.93' height='3.33' fill='#1a1a1a'/><rect x='139.50' y='3.33' width='3.73' height='3.02' fill='#333'/><rect x='139.50' y='6.34' width='3.73' height='3.02' fill='#444'/><rect x='131.65' y='12.69' width='3.73' height='3.02' fill='#2b2b2b'/><rect x='131.65' y='15.70' width='3.73' height='3.02' fill='#333'/><rect x='148.66' y='0.00' width='3.93' height='3.33' fill='#444'/><rect x='152.58' y='0.00' width='3.93' height='3.33' fill='#2b2b2b'/><rect x='144.73' y='9.36' width='3.93' height='3.33' fill='#444'/><rect x='152.58' y='9.36' width='3.93' height='3.33' fill='#2b2b2b'/><rect x='144.73' y='17.47' width='3.93' height='3.33' fill='#333'/><rect x='148.66' y='17.47' width='3.93' height='3.33' fill='#222'/><rect x='152.58' y='17.47' width='3.93' height='3.33' fill='#333'/><rect x='144.73' y='3.33' width='3.73' height='3.02' fill='#2b2b2b'/><rect x='144.73' y='6.34' width='3.73' height='3.02' fill='#bbb'/><rect x='152.58' y='3.33' width='3.73' height='3.02' fill='#1a1a1a'/><rect x='152.58' y='6.34' width='3.73' height='3.02' fill='#2b2b2b'/><rect x='152.58' y='12.69' width='3.73' height='3.02' fill='#222'/><rect x='152.58' y='15.70' width='3.73' height='3.02' fill='#444'/><rect x='157.82' y='0.00' width='3.93' height='3.33' fill='#333'/><rect x='161.74' y='0.00' width='3.93' height='3.33' fill='#444'/><rect x='165.67' y='0.00' width='3.93' height='3.33' fill='#222'/><rect x='157.82' y='9.36' width='3.93' height='3.33' fill='#444'/><rect x='161.74' y='9.36' width='3.93' height='3.33' fill='#333'/><rect x='165.67' y='9.36' width='3.93' height='3.33' fill='#2b2b2b'/><rect x='157.82' y='17.47' width='3.93' height='3.33' fill='#444'/><rect x='161.74' y='17.47' width='3.93' height='3.33' fill='#1a1a1a'/><rect x='165.67' y='17.47' width='3.93' height='3.33' fill='#2b2b2b'/><rect x='157.82' y='3.33' width='3.73' height='3.02' fill='#222'/><rect x='157.82' y='6.34' width='3.73' height='3.02' fill='#1a1a1a'/><rect x='165.67' y='12.69' width='3.73' height='3.02' fill='#d5d5d5'/><rect x='165.67' y='15.70' width='3.73' height='3.02' fill='#d5d5d5'/></svg>
<div class='a' style='left:1619.8px;top:473.6px;width:899.8px;height:366.19999999999993px;background:#fff;border:2px solid #d9d9d9;border-radius:16px;box-sizing:border-box'></div>
<svg class='a' style='left:1645.8px;top:500px' width='128' height='128' viewBox='0 0 128 128'>
<defs><clipPath id='pc'><rect x='0' y='0' width='128' height='128' rx='10'/></clipPath>
<linearGradient id='pg' x1='1' y1='0' x2='0' y2='1'><stop offset='0' stop-color='#7b3658'/><stop offset='1' stop-color='#5c2045'/></linearGradient></defs>
<g clip-path='url(#pc)'>
<rect width='128' height='128' fill='#3a3157'/>
<circle cx='30' cy='116' r='109' fill='#463e67'/>
<circle cx='30' cy='116' r='103' fill='#3f3660'/>
<circle cx='122.5' cy='19' r='10.8' fill='#8b7d5b'/>
<circle cx='30' cy='116' r='98' fill='url(#pg)'/>
<g stroke='#7f3d5e' stroke-width='5.5' stroke-linecap='round'>
<line x1='5' y1='36' x2='22' y2='29'/><line x1='34' y1='58' x2='58' y2='48'/><line x1='12' y1='80' x2='30' y2='72'/>
<line x1='75' y1='100' x2='104' y2='88'/><line x1='44' y1='121' x2='76' y2='108'/><line x1='96' y1='126' x2='122' y2='114'/>
<line x1='4' y1='110' x2='20' y2='103'/>
</g>
</g>
<g font-family='Liberation Sans' font-weight='700'>
<text x='10.5' y='63' font-size='38' fill='#2a1632' stroke='#2a1632' stroke-width='0.6' textLength='107' lengthAdjust='spacingAndGlyphs'>Planet</text>
<text x='9' y='61' font-size='38' fill='#e8637a' stroke='#e8637a' stroke-width='0.6' textLength='107' lengthAdjust='spacingAndGlyphs'>Planet</text>
<text x='11' y='92.5' font-size='33' fill='#2a1632' stroke='#2a1632' stroke-width='0.5' textLength='107' lengthAdjust='spacingAndGlyphs'>explore</text>
<text x='9.5' y='90.4' font-size='33' fill='#7ee2cf' stroke='#7ee2cf' stroke-width='0.5' textLength='107' lengthAdjust='spacingAndGlyphs'>explore</text>
</g>
</svg>
<div class='t' style='left:1798.03px;top:504.20px;font-size:32.5px;line-height:32.5px;font-weight:700;color:#3c3c3c;transform:scaleX(0.9329);transform-origin:0 0;'>Planet explore</div>
<div class='t' style='left:1798.20px;top:539.80px;font-size:24.4px;line-height:24.4px;font-weight:400;color:#1c1e21;transform:scaleX(0.9482);transform-origin:0 0;'>App ID: 43</div>
<div class='t' style='left:1798.06px;top:567.80px;font-size:24.4px;line-height:24.4px;font-weight:400;color:#1c1e21;transform:scaleX(0.9698);transform-origin:0 0;'>Mode: Live</div>
<div class='t' style='left:1798.20px;top:596.90px;font-size:24.4px;line-height:24.4px;font-weight:400;color:#1c1e21;transform:scaleX(0.9598);transform-origin:0 0;'>Type: Consumer</div>
<div class='t' style='left:1798.02px;top:626.00px;font-size:24.4px;line-height:24.4px;font-weight:400;color:#1c1e21;transform:scaleX(0.9906);transform-origin:0 0;'>Business: <span style='color:#2f65d6'>Com2us Platform</span></div>
<div class='a' style='left:2445.5px;top:500px;width:47.80000000000018px;height:48px;border:2px solid #d6d6d6;border-radius:12px;box-sizing:border-box;background:#fff'></div>
<div class='a' style='left:1622.8px;top:764px;width:894.2px;height:2px;background:#ececec'></div>
<svg class='a' style='left:1642.3px;top:785.5px' width='32' height='36' viewBox='0 0 32 36'>
<path d='M15.5 1.8 C12.3 4.6 8.5 6.2 2.7 7.1 L2.7 17.9 C2.7 25 8 29 15.5 31 C23 29 28.2 25 28.2 17.9 L28.2 7.1 C22.5 6.2 18.7 4.6 15.5 1.8 Z' fill='none' stroke='#3a3a3a' stroke-width='2.2' stroke-linejoin='round'/>
<path d='M15.5 9.8 L17.15 14.13 L21.78 14.36 L18.16 17.27 L19.38 21.74 L15.5 19.2 L11.62 21.74 L12.84 17.27 L9.22 14.36 L13.85 14.13 Z' fill='#3a3a3a' stroke='#3a3a3a' stroke-width='0.7' stroke-linejoin='round'/>
</svg>
<div class='t' style='left:1678.50px;top:786.70px;font-size:28.5px;line-height:28.5px;font-weight:400;color:#1c1e21;'>Administrator</div>
<div class='a' style='left:2448.2px;top:798.6px;width:6.2px;height:6.2px;border-radius:50%;background:#1c1e21'></div>
<div class='a' style='left:2458.2px;top:798.6px;width:6.2px;height:6.2px;border-radius:50%;background:#1c1e21'></div>
<div class='a' style='left:2468.2px;top:798.6px;width:6.2px;height:6.2px;border-radius:50%;background:#1c1e21'></div>
<svg class='a' style='left:1906.6px;top:542.6px' width='176.1' height='21.6'><rect x='4.86' y='0.00' width='4.06' height='3.46' fill='#2b2b2b'/><rect x='8.93' y='0.00' width='4.06' height='3.46' fill='#1a1a1a'/><rect x='0.80' y='18.14' width='4.06' height='3.46' fill='#333'/><rect x='4.86' y='18.14' width='4.06' height='3.46' fill='#444'/><rect x='8.93' y='18.14' width='4.06' height='3.46' fill='#333'/><rect x='0.80' y='3.46' width='3.86' height='3.13' fill='#777'/><rect x='0.80' y='6.59' width='3.86' height='3.13' fill='#d5d5d5'/><rect x='8.93' y='3.46' width='3.86' height='3.13' fill='#999'/><rect x='8.93' y='6.59' width='3.86' height='3.13' fill='#1a1a1a'/><rect x='0.80' y='13.18' width='3.86' height='3.13' fill='#444'/><rect x='0.80' y='16.31' width='3.86' height='3.13' fill='#999'/><rect x='8.93' y='13.18' width='3.86' height='3.13' fill='#333'/><rect x='8.93' y='16.31' width='3.86' height='3.13' fill='#bbb'/><rect x='14.35' y='0.00' width='4.06' height='3.46' fill='#d5d5d5'/><rect x='18.41' y='0.00' width='4.06' height='3.46' fill='#333'/><rect x='22.47' y='0.00' width='4.06' height='3.46' fill='#2b2b2b'/><rect x='14.35' y='9.72' width='4.06' height='3.46' fill='#2b2b2b'/><rect x='18.41' y='9.72' width='4.06' height='3.46' fill='#333'/><rect x='22.47' y='9.72' width='4.06' height='3.46' fill='#444'/><rect x='14.35' y='18.14' width='4.06' height='3.46' fill='#222'/><rect x='18.41' y='18.14' width='4.06' height='3.46' fill='#222'/><rect x='22.47' y='18.14' width='4.06' height='3.46' fill='#333'/><rect x='14.35' y='3.46' width='3.86' height='3.13' fill='#d5d5d5'/><rect x='14.35' y='6.59' width='3.86' height='3.13' fill='#444'/><rect x='22.47' y='3.46' width='3.86' height='3.13' fill='#1a1a1a'/><rect x='22.47' y='6.59' width='3.86' height='3.13' fill='#1a1a1a'/><rect x='22.47' y='13.18' width='3.86' height='3.13' fill='#1a1a1a'/><rect x='27.89' y='0.00' width='4.06' height='3.46' fill='#1a1a1a'/><rect x='31.96' y='0.00' width='4.06' height='3.46' fill='#2b2b2b'/><rect x='36.02' y='0.00' width='4.06' height='3.46' fill='#1a1a1a'/><rect x='27.89' y='18.14' width='4.06' height='3.46' fill='#1a1a1a'/><rect x='36.02' y='18.14' width='4.06' height='3.46' fill='#1a1a1a'/><rect x='27.89' y='6.59' width='3.86' height='3.13' fill='#1a1a1a'/><rect x='36.02' y='3.46' width='3.86' height='3.13' fill='#222'/><rect x='36.02' y='6.59' width='3.86' height='3.13' fill='#1a1a1a'/><rect x='27.89' y='13.18' width='3.86' height='3.13' fill='#222'/><rect x='27.89' y='16.31' width='3.86' height='3.13' fill='#2b2b2b'/><rect x='36.02' y='13.18' width='3.86' height='3.13' fill='#1a1a1a'/><rect x='36.02' y='16.31' width='3.86' height='3.13' fill='#2b2b2b'/><rect x='41.44' y='0.00' width='4.06' height='3.46' fill='#1a1a1a'/><rect x='45.50' y='0.00' width='4.06' height='3.46' fill='#444'/><rect x='49.57' y='0.00' width='4.06' height='3.46' fill='#222'/><rect x='49.57' y='6.59' width='3.86' height='3.13' fill='#1a1a1a'/><rect x='49.57' y='13.18' width='3.86' height='3.13' fill='#999'/><rect x='49.57' y='16.31' width='3.86' height='3.13' fill='#333'/><rect x='54.98' y='0.00' width='4.06' height='3.46' fill='#bbb'/><rect x='59.05' y='0.00' width='4.06' height='3.46' fill='#333'/><rect x='63.11' y='0.00' width='4.06' height='3.46' fill='#222'/><rect x='54.98' y='9.72' width='4.06' height='3.46' fill='#222'/><rect x='59.05' y='9.72' width='4.06' height='3.46' fill='#222'/><rect x='63.11' y='9.72' width='4.06' height='3.46' fill='#777'/><rect x='54.98' y='18.14' width='4.06' height='3.46' fill='#333'/><rect x='54.98' y='3.46' width='3.86' height='3.13' fill='#444'/><rect x='54.98' y='6.59' width='3.86' height='3.13' fill='#333'/><rect x='63.11' y='3.46' width='3.86' height='3.13' fill='#222'/><rect x='54.98' y='13.18' width='3.86' height='3.13' fill='#1a1a1a'/><rect x='54.98' y='16.31' width='3.86' height='3.13' fill='#222'/><rect x='63.11' y='13.18' width='3.86' height='3.13' fill='#1a1a1a'/><rect x='63.11' y='16.31' width='3.86' height='3.13' fill='#2b2b2b'/><rect x='68.53' y='0.00' width='4.06' height='3.46' fill='#222'/><rect x='72.59' y='0.00' width='4.06' height='3.46' fill='#444'/><rect x='68.53' y='9.72' width='4.06' height='3.46' fill='#999'/><rect x='72.59' y='9.72' width='4.06' height='3.46' fill='#333'/><rect x='76.66' y='9.72' width='4.06' height='3.46' fill='#1a1a1a'/><rect x='68.53' y='18.14' width='4.06' height='3.46' fill='#2b2b2b'/><rect x='72.59' y='18.14' width='4.06' height='3.46' fill='#d5d5d5'/><rect x='68.53' y='3.46' width='3.86' height='3.13' fill='#1a1a1a'/><rect x='68.53' y='6.59' width='3.86' height='3.13' fill='#333'/><rect x='76.66' y='3.46' width='3.86' height='3.13' fill='#777'/><rect x='68.53' y='16.31' width='3.86' height='3.13' fill='#222'/><rect x='76.66' y='13.18' width='3.86' height='3.13' fill='#444'/><rect x='76.66' y='16.31' width='3.86' height='3.13' fill='#222'/><rect x='82.08' y='0.00' width='4.06' height='3.46' fill='#1a1a1a'/><rect x='86.14' y='0.00' width='4.06' height='3.46' fill='#2b2b2b'/><rect x='90.20' y='0.00' width='4.06' height='3.46' fill='#777'/><rect x='86.14' y='9.72' width='4.06' height='3.46' fill='#333'/><rect x='90.20' y='9.72' width='4.06' height='3.46' fill='#999'/><rect x='82.08' y='18.14' width='4.06' height='3.46' fill='#444'/><rect x='86.14' y='18.14' width='4.06' height='3.46' fill='#333'/><rect x='90.20' y='18.14' width='4.06' height='3.46' fill='#2b2b2b'/><rect x='82.08' y='3.46' width='3.86' height='3.13' fill='#444'/><rect x='82.08' y='6.59' width='3.86' height='3.13' fill='#1a1a1a'/><rect x='90.20' y='13.18' width='3.86' height='3.13' fill='#1a1a1a'/><rect x='95.62' y='0.00' width='4.06' height='3.46' fill='#333'/><rect x='99.69' y='0.00' width='4.06' height='3.46' fill='#1a1a1a'/><rect x='103.75' y='0.00' width='4.06' height='3.46' fill='#222'/><rect x='95.62' y='9.72' width='4.06' height='3.46' fill='#bbb'/><rect x='99.69' y='9.72' width='4.06' height='3.46' fill='#1a1a1a'/><rect x='103.75' y='9.72' width='4.06' height='3.46' fill='#d5d5d5'/><rect x='99.69' y='18.14' width='4.06' height='3.46' fill='#2b2b2b'/><rect x='103.75' y='18.14' width='4.06' height='3.46' fill='#222'/><rect x='103.75' y='3.46' width='3.86' height='3.13' fill='#999'/><rect x='103.75' y='6.59' width='3.86' height='3.13' fill='#444'/><rect x='95.62' y='13.18' width='3.86' height='3.13' fill='#333'/><rect x='95.62' y='16.31' width='3.86' height='3.13' fill='#333'/><rect x='109.17' y='9.72' width='4.06' height='3.46' fill='#d5d5d5'/><rect x='113.23' y='9.72' width='4.06' height='3.46' fill='#1a1a1a'/><rect x='117.30' y='9.72' width='4.06' height='3.46' fill='#222'/><rect x='109.17' y='3.46' width='3.86' height='3.13' fill='#333'/><rect x='109.17' y='6.59' width='3.86' height='3.13' fill='#1a1a1a'/><rect x='117.30' y='3.46' width='3.86' height='3.13' fill='#333'/><rect x='117.30' y='6.59' width='3.86' height='3.13' fill='#1a1a1a'/><rect x='117.30' y='13.18' width='3.86' height='3.13' fill='#444'/><rect x='117.30' y='16.31' width='3.86' height='3.13' fill='#777'/><rect x='122.72' y='0.00' width='4.06' height='3.46' fill='#222'/><rect x='126.78' y='0.00' width='4.06' height='3.46' fill='#999'/><rect x='130.84' y='0.00' width='4.06' height='3.46' fill='#1a1a1a'/><rect x='122.72' y='9.72' width='4.06' height='3.46' fill='#2b2b2b'/><rect x='126.78' y='9.72' width='4.06' height='3.46' fill='#222'/><rect x='130.84' y='9.72' width='4.06' height='3.46' fill='#2b2b2b'/><rect x='126.78' y='18.14' width='4.06' height='3.46' fill='#1a1a1a'/><rect x='130.84' y='18.14' width='4.06' height='3.46' fill='#2b2b2b'/><rect x='122.72' y='3.46' width='3.86' height='3.13' fill='#d5d5d5'/><rect x='122.72' y='16.31' width='3.86' height='3.13' fill='#333'/><rect x='130.84' y='13.18' width='3.86' height='3.13' fill='#222'/><rect x='136.26' y='0.00' width='4.06' height='3.46' fill='#2b2b2b'/><rect x='140.33' y='0.00' width='4.06' height='3.46' fill='#333'/><rect x='144.39' y='0.00' width='4.06' height='3.46' fill='#444'/><rect x='144.39' y='3.46' width='3.86' height='3.13' fill='#222'/><rect x='144.39' y='6.59' width='3.86' height='3.13' fill='#222'/><rect x='144.39' y='13.18' width='3.86' height='3.13' fill='#2b2b2b'/><rect x='149.81' y='0.00' width='4.06' height='3.46' fill='#2b2b2b'/><rect x='153.87' y='0.00' width='4.06' height='3.46' fill='#1a1a1a'/><rect x='157.94' y='0.00' width='4.06' height='3.46' fill='#444'/><rect x='149.81' y='9.72' width='4.06' height='3.46' fill='#444'/><rect x='153.87' y='9.72' width='4.06' height='3.46' fill='#222'/><rect x='157.94' y='9.72' width='4.06' height='3.46' fill='#444'/><rect x='149.81' y='18.14' width='4.06' height='3.46' fill='#777'/><rect x='153.87' y='18.14' width='4.06' height='3.46' fill='#2b2b2b'/><rect x='157.94' y='18.14' width='4.06' height='3.46' fill='#2b2b2b'/><rect x='149.81' y='3.46' width='3.86' height='3.13' fill='#333'/><rect x='149.81' y='6.59' width='3.86' height='3.13' fill='#222'/><rect x='157.94' y='13.18' width='3.86' height='3.13' fill='#222'/><rect x='157.94' y='16.31' width='3.86' height='3.13' fill='#1a1a1a'/><rect x='163.35' y='0.00' width='4.06' height='3.46' fill='#2b2b2b'/><rect x='167.42' y='0.00' width='4.06' height='3.46' fill='#222'/><rect x='171.48' y='0.00' width='4.06' height='3.46' fill='#333'/><rect x='163.35' y='9.72' width='4.06' height='3.46' fill='#2b2b2b'/><rect x='167.42' y='9.72' width='4.06' height='3.46' fill='#444'/><rect x='171.48' y='9.72' width='4.06' height='3.46' fill='#2b2b2b'/><rect x='163.35' y='18.14' width='4.06' height='3.46' fill='#2b2b2b'/><rect x='167.42' y='18.14' width='4.06' height='3.46' fill='#1a1a1a'/><rect x='171.48' y='18.14' width='4.06' height='3.46' fill='#222'/><rect x='171.48' y='3.46' width='3.86' height='3.13' fill='#d5d5d5'/><rect x='171.48' y='6.59' width='3.86' height='3.13' fill='#999'/><rect x='171.48' y='13.18' width='3.86' height='3.13' fill='#1a1a1a'/></svg>
<div class='a' style='left:688px;top:873.9px;width:900.1999999999998px;height:365.6px;background:#fff;border:2px solid #d9d9d9;border-radius:16px;box-sizing:border-box'></div>
<svg class='a' style='left:714px;top:900px' width='128' height='128' viewBox='43 55 1382 1380'>
<defs><linearGradient id='ag714900' x1='0' y1='0' x2='0' y2='1'><stop offset='0' stop-color='#969dac'/><stop offset='1' stop-color='#7a8092'/></linearGradient></defs>
<rect x='43' y='55' width='1382' height='1380' rx='110' fill='url(#ag714900)'/>
<g fill='none' stroke='#eff0f3' stroke-width='50'>
<ellipse cx='740' cy='744' rx='209' ry='505'/>
<ellipse cx='740' cy='744' rx='209' ry='505' transform='rotate(60 740 744)'/>
<ellipse cx='740' cy='744' rx='209' ry='505' transform='rotate(-60 740 744)'/>
</g>
<path d='M740 645 L832 697 L832 790 L740 842 L648 790 L648 697 Z' fill='#f2f3f5'/>
<path d='M648 697 L740 749 L832 697 M740 749 L740 842' fill='none' stroke='#8d93a1' stroke-width='16'/>
</svg>
<div class='t' style='left:866.20px;top:903.80px;font-size:32.5px;line-height:32.5px;font-weight:700;color:#3c3c3c;transform:scaleX(0.9492);transform-origin:0 0;'>Platform Mi Sample</div>
<div class='t' style='left:866.40px;top:943.90px;font-size:24.4px;line-height:24.4px;font-weight:400;color:#1c1e21;transform:scaleX(0.9482);transform-origin:0 0;'>App ID: 92</div>
<div class='t' style='left:866.25px;top:976.00px;font-size:24.4px;line-height:24.4px;font-weight:400;color:#1c1e21;transform:scaleX(0.9749);transform-origin:0 0;'>Mode: In development</div>
<div class='t' style='left:866.40px;top:1008.10px;font-size:24.4px;line-height:24.4px;font-weight:400;color:#1c1e21;transform:scaleX(0.9508);transform-origin:0 0;'>Type: None</div>
<div class='a' style='left:1514.1px;top:900px;width:47.799999999999955px;height:48px;border:2px solid #d6d6d6;border-radius:12px;box-sizing:border-box;background:#fff'></div>
<div class='a' style='left:691px;top:1163.6px;width:894.5999999999999px;height:2.0px;background:#ececec'></div>
<svg class='a' style='left:710.5px;top:1185.8px' width='32' height='36' viewBox='0 0 32 36'>
<path d='M15.5 1.8 C12.3 4.6 8.5 6.2 2.7 7.1 L2.7 17.9 C2.7 25 8 29 15.5 31 C23 29 28.2 25 28.2 17.9 L28.2 7.1 C22.5 6.2 18.7 4.6 15.5 1.8 Z' fill='none' stroke='#3a3a3a' stroke-width='2.2' stroke-linejoin='round'/>
<path d='M15.5 9.8 L17.15 14.13 L21.78 14.36 L18.16 17.27 L19.38 21.74 L15.5 19.2 L11.62 21.74 L12.84 17.27 L9.22 14.36 L13.85 14.13 Z' fill='#3a3a3a' stroke='#3a3a3a' stroke-width='0.7' stroke-linejoin='round'/>
</svg>
<div class='t' style='left:746.70px;top:1187.30px;font-size:28.5px;line-height:28.5px;font-weight:400;color:#1c1e21;'>Administrator</div>
<div class='a' style='left:1516.8px;top:1199.2px;width:6.2px;height:6.2px;border-radius:50%;background:#1c1e21'></div>
<div class='a' style='left:1526.8px;top:1199.2px;width:6.2px;height:6.2px;border-radius:50%;background:#1c1e21'></div>
<div class='a' style='left:1536.8px;top:1199.2px;width:6.2px;height:6.2px;border-radius:50%;background:#1c1e21'></div>
<svg class='a' style='left:974.8px;top:947.5px' width='159.5' height='19.5'><rect x='0.80' y='0.00' width='3.99' height='3.12' fill='#444'/><rect x='4.79' y='0.00' width='3.99' height='3.12' fill='#444'/><rect x='0.80' y='8.78' width='3.99' height='3.12' fill='#222'/><rect x='4.79' y='8.78' width='3.99' height='3.12' fill='#444'/><rect x='8.78' y='8.78' width='3.99' height='3.12' fill='#222'/><rect x='0.80' y='16.38' width='3.99' height='3.12' fill='#444'/><rect x='4.79' y='16.38' width='3.99' height='3.12' fill='#1a1a1a'/><rect x='8.78' y='16.38' width='3.99' height='3.12' fill='#777'/><rect x='8.78' y='3.12' width='3.79' height='2.83' fill='#2b2b2b'/><rect x='8.78' y='5.95' width='3.79' height='2.83' fill='#333'/><rect x='8.78' y='11.89' width='3.79' height='2.83' fill='#d5d5d5'/><rect x='8.78' y='14.72' width='3.79' height='2.83' fill='#222'/><rect x='18.08' y='0.00' width='3.99' height='3.12' fill='#333'/><rect x='22.07' y='0.00' width='3.99' height='3.12' fill='#333'/><rect x='14.09' y='8.78' width='3.99' height='3.12' fill='#2b2b2b'/><rect x='18.08' y='8.78' width='3.99' height='3.12' fill='#222'/><rect x='22.07' y='8.78' width='3.99' height='3.12' fill='#1a1a1a'/><rect x='14.09' y='16.38' width='3.99' height='3.12' fill='#999'/><rect x='18.08' y='16.38' width='3.99' height='3.12' fill='#444'/><rect x='22.07' y='16.38' width='3.99' height='3.12' fill='#222'/><rect x='14.09' y='3.12' width='3.79' height='2.83' fill='#bbb'/><rect x='14.09' y='5.95' width='3.79' height='2.83' fill='#333'/><rect x='22.07' y='14.72' width='3.79' height='2.83' fill='#222'/><rect x='27.38' y='0.00' width='3.99' height='3.12' fill='#1a1a1a'/><rect x='35.36' y='0.00' width='3.99' height='3.12' fill='#444'/><rect x='27.38' y='16.38' width='3.99' height='3.12' fill='#bbb'/><rect x='31.37' y='16.38' width='3.99' height='3.12' fill='#bbb'/><rect x='27.38' y='5.95' width='3.79' height='2.83' fill='#d5d5d5'/><rect x='35.36' y='3.12' width='3.79' height='2.83' fill='#1a1a1a'/><rect x='35.36' y='5.95' width='3.79' height='2.83' fill='#2b2b2b'/><rect x='27.38' y='11.89' width='3.79' height='2.83' fill='#d5d5d5'/><rect x='27.38' y='14.72' width='3.79' height='2.83' fill='#d5d5d5'/><rect x='35.36' y='11.89' width='3.79' height='2.83' fill='#444'/><rect x='40.67' y='0.00' width='3.99' height='3.12' fill='#222'/><rect x='44.66' y='0.00' width='3.99' height='3.12' fill='#2b2b2b'/><rect x='48.65' y='0.00' width='3.99' height='3.12' fill='#1a1a1a'/><rect x='40.67' y='8.78' width='3.99' height='3.12' fill='#bbb'/><rect x='48.65' y='8.78' width='3.99' height='3.12' fill='#1a1a1a'/><rect x='40.67' y='16.38' width='3.99' height='3.12' fill='#2b2b2b'/><rect x='44.66' y='16.38' width='3.99' height='3.12' fill='#2b2b2b'/><rect x='48.65' y='16.38' width='3.99' height='3.12' fill='#1a1a1a'/><rect x='40.67' y='3.12' width='3.79' height='2.83' fill='#2b2b2b'/><rect x='40.67' y='5.95' width='3.79' height='2.83' fill='#444'/><rect x='48.65' y='3.12' width='3.79' height='2.83' fill='#222'/><rect x='48.65' y='5.95' width='3.79' height='2.83' fill='#444'/><rect x='40.67' y='11.89' width='3.79' height='2.83' fill='#1a1a1a'/><rect x='40.67' y='14.72' width='3.79' height='2.83' fill='#444'/><rect x='48.65' y='11.89' width='3.79' height='2.83' fill='#444'/><rect x='48.65' y='14.72' width='3.79' height='2.83' fill='#222'/><rect x='53.97' y='0.00' width='3.99' height='3.12' fill='#1a1a1a'/><rect x='61.94' y='0.00' width='3.99' height='3.12' fill='#222'/><rect x='53.97' y='8.78' width='3.99' height='3.12' fill='#222'/><rect x='61.94' y='8.78' width='3.99' height='3.12' fill='#444'/><rect x='53.97' y='16.38' width='3.99' height='3.12' fill='#1a1a1a'/><rect x='61.94' y='16.38' width='3.99' height='3.12' fill='#444'/><rect x='53.97' y='3.12' width='3.79' height='2.83' fill='#1a1a1a'/><rect x='53.97' y='5.95' width='3.79' height='2.83' fill='#222'/><rect x='61.94' y='11.89' width='3.79' height='2.83' fill='#2b2b2b'/><rect x='61.94' y='14.72' width='3.79' height='2.83' fill='#2b2b2b'/><rect x='67.26' y='0.00' width='3.99' height='3.12' fill='#333'/><rect x='71.25' y='0.00' width='3.99' height='3.12' fill='#444'/><rect x='75.23' y='0.00' width='3.99' height='3.12' fill='#222'/><rect x='71.25' y='8.78' width='3.99' height='3.12' fill='#444'/><rect x='75.23' y='8.78' width='3.99' height='3.12' fill='#222'/><rect x='67.26' y='16.38' width='3.99' height='3.12' fill='#2b2b2b'/><rect x='75.23' y='16.38' width='3.99' height='3.12' fill='#444'/><rect x='67.26' y='3.12' width='3.79' height='2.83' fill='#d5d5d5'/><rect x='67.26' y='5.95' width='3.79' height='2.83' fill='#1a1a1a'/><rect x='67.26' y='11.89' width='3.79' height='2.83' fill='#1a1a1a'/><rect x='67.26' y='14.72' width='3.79' height='2.83' fill='#444'/><rect x='75.23' y='14.72' width='3.79' height='2.83' fill='#d5d5d5'/><rect x='80.55' y='0.00' width='3.99' height='3.12' fill='#444'/><rect x='84.54' y='0.00' width='3.99' height='3.12' fill='#222'/><rect x='88.52' y='0.00' width='3.99' height='3.12' fill='#999'/><rect x='80.55' y='16.38' width='3.99' height='3.12' fill='#444'/><rect x='84.54' y='16.38' width='3.99' height='3.12' fill='#2b2b2b'/><rect x='88.52' y='16.38' width='3.99' height='3.12' fill='#444'/><rect x='80.55' y='3.12' width='3.79' height='2.83' fill='#1a1a1a'/><rect x='80.55' y='5.95' width='3.79' height='2.83' fill='#1a1a1a'/><rect x='88.52' y='3.12' width='3.79' height='2.83' fill='#1a1a1a'/><rect x='88.52' y='5.95' width='3.79' height='2.83' fill='#444'/><rect x='80.55' y='11.89' width='3.79' height='2.83' fill='#1a1a1a'/><rect x='80.55' y='14.72' width='3.79' height='2.83' fill='#444'/><rect x='88.52' y='11.89' width='3.79' height='2.83' fill='#2b2b2b'/><rect x='88.52' y='14.72' width='3.79' height='2.83' fill='#1a1a1a'/><rect x='93.84' y='0.00' width='3.99' height='3.12' fill='#1a1a1a'/><rect x='97.83' y='0.00' width='3.99' height='3.12' fill='#444'/><rect x='101.82' y='0.00' width='3.99' height='3.12' fill='#444'/><rect x='93.84' y='8.78' width='3.99' height='3.12' fill='#333'/><rect x='97.83' y='8.78' width='3.99' height='3.12' fill='#333'/><rect x='101.82' y='8.78' width='3.99' height='3.12' fill='#444'/><rect x='93.84' y='16.38' width='3.99' height='3.12' fill='#333'/><rect x='97.83' y='16.38' width='3.99' height='3.12' fill='#1a1a1a'/><rect x='101.82' y='16.38' width='3.99' height='3.12' fill='#444'/><rect x='93.84' y='3.12' width='3.79' height='2.83' fill='#333'/><rect x='93.84' y='5.95' width='3.79' height='2.83' fill='#d5d5d5'/><rect x='93.84' y='11.89' width='3.79' height='2.83' fill='#444'/><rect x='93.84' y='14.72' width='3.79' height='2.83' fill='#1a1a1a'/><rect x='101.82' y='11.89' width='3.79' height='2.83' fill='#333'/><rect x='115.11' y='3.12' width='3.79' height='2.83' fill='#333'/><rect x='115.11' y='5.95' width='3.79' height='2.83' fill='#1a1a1a'/><rect x='120.42' y='0.00' width='3.99' height='3.12' fill='#bbb'/><rect x='124.41' y='0.00' width='3.99' height='3.12' fill='#444'/><rect x='128.40' y='0.00' width='3.99' height='3.12' fill='#1a1a1a'/><rect x='128.40' y='3.12' width='3.79' height='2.83' fill='#444'/><rect x='128.40' y='11.89' width='3.79' height='2.83' fill='#1a1a1a'/><rect x='128.40' y='14.72' width='3.79' height='2.83' fill='#222'/><rect x='133.72' y='0.00' width='3.99' height='3.12' fill='#333'/><rect x='137.70' y='0.00' width='3.99' height='3.12' fill='#2b2b2b'/><rect x='141.69' y='0.00' width='3.99' height='3.12' fill='#d5d5d5'/><rect x='141.69' y='3.12' width='3.79' height='2.83' fill='#d5d5d5'/><rect x='141.69' y='5.95' width='3.79' height='2.83' fill='#d5d5d5'/><rect x='141.69' y='11.89' width='3.79' height='2.83' fill='#444'/><rect x='141.69' y='14.72' width='3.79' height='2.83' fill='#333'/><rect x='147.01' y='0.00' width='3.99' height='3.12' fill='#333'/><rect x='151.00' y='0.00' width='3.99' height='3.12' fill='#333'/><rect x='154.98' y='0.00' width='3.99' height='3.12' fill='#222'/><rect x='147.01' y='8.78' width='3.99' height='3.12' fill='#444'/><rect x='151.00' y='8.78' width='3.99' height='3.12' fill='#bbb'/><rect x='154.98' y='8.78' width='3.99' height='3.12' fill='#444'/><rect x='147.01' y='16.38' width='3.99' height='3.12' fill='#2b2b2b'/><rect x='151.00' y='16.38' width='3.99' height='3.12' fill='#2b2b2b'/><rect x='154.98' y='16.38' width='3.99' height='3.12' fill='#222'/><rect x='154.98' y='3.12' width='3.79' height='2.83' fill='#333'/><rect x='154.98' y='5.95' width='3.79' height='2.83' fill='#333'/><rect x='147.01' y='11.89' width='3.79' height='2.83' fill='#444'/><rect x='147.01' y='14.72' width='3.79' height='2.83' fill='#444'/></svg>
<div class='a' style='left:1619.8px;top:873.9px;width:899.8px;height:366.5000000000001px;background:#fff;border:2px solid #d9d9d9;border-radius:16px;box-sizing:border-box'></div>
<svg class='a' style='left:1645.8px;top:900px' width='128' height='128' viewBox='43 55 1382 1380'>
<defs><linearGradient id='ag1645.8900' x1='0' y1='0' x2='0' y2='1'><stop offset='0' stop-color='#969dac'/><stop offset='1' stop-color='#7a8092'/></linearGradient></defs>
<rect x='43' y='55' width='1382' height='1380' rx='110' fill='url(#ag1645.8900)'/>
<g fill='none' stroke='#eff0f3' stroke-width='50'>
<ellipse cx='740' cy='744' rx='209' ry='505'/>
<ellipse cx='740' cy='744' rx='209' ry='505' transform='rotate(60 740 744)'/>
<ellipse cx='740' cy='744' rx='209' ry='505' transform='rotate(-60 740 744)'/>
</g>
<path d='M740 645 L832 697 L832 790 L740 842 L648 790 L648 697 Z' fill='#f2f3f5'/>
<path d='M648 697 L740 749 L832 697 M740 749 L740 842' fill='none' stroke='#8d93a1' stroke-width='16'/>
</svg>
<div class='t' style='left:1798.97px;top:903.90px;font-size:32.5px;line-height:32.5px;font-weight:700;color:#3c3c3c;transform:scaleX(0.9278);transform-origin:0 0;'>2023_2Q_NEWAPP</div>
<div class='t' style='left:1798.20px;top:943.90px;font-size:24.4px;line-height:24.4px;font-weight:400;color:#1c1e21;transform:scaleX(0.9482);transform-origin:0 0;'>App ID: 82</div>
<div class='t' style='left:1798.05px;top:976.00px;font-size:24.4px;line-height:24.4px;font-weight:400;color:#1c1e21;transform:scaleX(0.9749);transform-origin:0 0;'>Mode: In development</div>
<div class='a' style='left:2445.5px;top:900px;width:47.80000000000018px;height:48px;border:2px solid #d6d6d6;border-radius:12px;box-sizing:border-box;background:#fff'></div>
<div class='a' style='left:1622.8px;top:1163.7px;width:894.2px;height:2.0px;background:#ececec'></div>
<svg class='a' style='left:1642.3px;top:1185.8px' width='32' height='36' viewBox='0 0 32 36'>
<path d='M15.5 1.8 C12.3 4.6 8.5 6.2 2.7 7.1 L2.7 17.9 C2.7 25 8 29 15.5 31 C23 29 28.2 25 28.2 17.9 L28.2 7.1 C22.5 6.2 18.7 4.6 15.5 1.8 Z' fill='none' stroke='#3a3a3a' stroke-width='2.2' stroke-linejoin='round'/>
<path d='M15.5 9.8 L17.15 14.13 L21.78 14.36 L18.16 17.27 L19.38 21.74 L15.5 19.2 L11.62 21.74 L12.84 17.27 L9.22 14.36 L13.85 14.13 Z' fill='#3a3a3a' stroke='#3a3a3a' stroke-width='0.7' stroke-linejoin='round'/>
</svg>
<div class='t' style='left:1678.50px;top:1187.30px;font-size:28.5px;line-height:28.5px;font-weight:400;color:#1c1e21;'>Administrator</div>
<div class='a' style='left:2448.2px;top:1199.2px;width:6.2px;height:6.2px;border-radius:50%;background:#1c1e21'></div>
<div class='a' style='left:2458.2px;top:1199.2px;width:6.2px;height:6.2px;border-radius:50%;background:#1c1e21'></div>
<div class='a' style='left:2468.2px;top:1199.2px;width:6.2px;height:6.2px;border-radius:50%;background:#1c1e21'></div>
<svg class='a' style='left:1906.6px;top:947.3px' width='169.1' height='19.7'><rect x='0.80' y='0.00' width='3.90' height='3.15' fill='#333'/><rect x='4.70' y='0.00' width='3.90' height='3.15' fill='#333'/><rect x='8.60' y='0.00' width='3.90' height='3.15' fill='#1a1a1a'/><rect x='0.80' y='8.87' width='3.90' height='3.15' fill='#2b2b2b'/><rect x='4.70' y='8.87' width='3.90' height='3.15' fill='#2b2b2b'/><rect x='8.60' y='8.87' width='3.90' height='3.15' fill='#bbb'/><rect x='0.80' y='16.55' width='3.90' height='3.15' fill='#2b2b2b'/><rect x='4.70' y='16.55' width='3.90' height='3.15' fill='#bbb'/><rect x='8.60' y='3.15' width='3.71' height='2.86' fill='#444'/><rect x='8.60' y='6.01' width='3.71' height='2.86' fill='#2b2b2b'/><rect x='8.60' y='14.87' width='3.71' height='2.86' fill='#bbb'/><rect x='13.81' y='0.00' width='3.90' height='3.15' fill='#2b2b2b'/><rect x='17.71' y='0.00' width='3.90' height='3.15' fill='#333'/><rect x='21.61' y='0.00' width='3.90' height='3.15' fill='#333'/><rect x='13.81' y='16.55' width='3.90' height='3.15' fill='#1a1a1a'/><rect x='21.61' y='16.55' width='3.90' height='3.15' fill='#d5d5d5'/><rect x='13.81' y='3.15' width='3.71' height='2.86' fill='#222'/><rect x='21.61' y='3.15' width='3.71' height='2.86' fill='#333'/><rect x='21.61' y='6.01' width='3.71' height='2.86' fill='#444'/><rect x='13.81' y='12.02' width='3.71' height='2.86' fill='#2b2b2b'/><rect x='21.61' y='14.87' width='3.71' height='2.86' fill='#444'/><rect x='26.82' y='0.00' width='3.90' height='3.15' fill='#bbb'/><rect x='30.72' y='0.00' width='3.90' height='3.15' fill='#1a1a1a'/><rect x='34.62' y='0.00' width='3.90' height='3.15' fill='#bbb'/><rect x='30.72' y='8.87' width='3.90' height='3.15' fill='#d5d5d5'/><rect x='34.62' y='8.87' width='3.90' height='3.15' fill='#777'/><rect x='26.82' y='16.55' width='3.90' height='3.15' fill='#333'/><rect x='30.72' y='16.55' width='3.90' height='3.15' fill='#444'/><rect x='34.62' y='16.55' width='3.90' height='3.15' fill='#1a1a1a'/><rect x='34.62' y='3.15' width='3.71' height='2.86' fill='#2b2b2b'/><rect x='34.62' y='6.01' width='3.71' height='2.86' fill='#2b2b2b'/><rect x='34.62' y='12.02' width='3.71' height='2.86' fill='#222'/><rect x='34.62' y='14.87' width='3.71' height='2.86' fill='#1a1a1a'/><rect x='43.73' y='0.00' width='3.90' height='3.15' fill='#222'/><rect x='47.63' y='0.00' width='3.90' height='3.15' fill='#444'/><rect x='39.82' y='16.55' width='3.90' height='3.15' fill='#777'/><rect x='43.73' y='16.55' width='3.90' height='3.15' fill='#333'/><rect x='47.63' y='16.55' width='3.90' height='3.15' fill='#222'/><rect x='39.82' y='3.15' width='3.71' height='2.86' fill='#1a1a1a'/><rect x='39.82' y='6.01' width='3.71' height='2.86' fill='#333'/><rect x='47.63' y='3.15' width='3.71' height='2.86' fill='#1a1a1a'/><rect x='39.82' y='12.02' width='3.71' height='2.86' fill='#222'/><rect x='39.82' y='14.87' width='3.71' height='2.86' fill='#2b2b2b'/><rect x='47.63' y='14.87' width='3.71' height='2.86' fill='#444'/><rect x='52.83' y='0.00' width='3.90' height='3.15' fill='#1a1a1a'/><rect x='56.73' y='0.00' width='3.90' height='3.15' fill='#222'/><rect x='60.64' y='0.00' width='3.90' height='3.15' fill='#222'/><rect x='52.83' y='8.87' width='3.90' height='3.15' fill='#2b2b2b'/><rect x='56.73' y='8.87' width='3.90' height='3.15' fill='#2b2b2b'/><rect x='60.64' y='8.87' width='3.90' height='3.15' fill='#333'/><rect x='56.73' y='16.55' width='3.90' height='3.15' fill='#999'/><rect x='52.83' y='3.15' width='3.71' height='2.86' fill='#2b2b2b'/><rect x='52.83' y='6.01' width='3.71' height='2.86' fill='#222'/><rect x='52.83' y='12.02' width='3.71' height='2.86' fill='#333'/><rect x='52.83' y='14.87' width='3.71' height='2.86' fill='#999'/><rect x='60.64' y='12.02' width='3.71' height='2.86' fill='#222'/><rect x='69.74' y='8.87' width='3.90' height='3.15' fill='#222'/><rect x='73.64' y='8.87' width='3.90' height='3.15' fill='#999'/><rect x='65.84' y='3.15' width='3.71' height='2.86' fill='#444'/><rect x='65.84' y='6.01' width='3.71' height='2.86' fill='#444'/><rect x='73.64' y='3.15' width='3.71' height='2.86' fill='#444'/><rect x='73.64' y='12.02' width='3.71' height='2.86' fill='#222'/><rect x='86.65' y='3.15' width='3.71' height='2.86' fill='#1a1a1a'/><rect x='86.65' y='6.01' width='3.71' height='2.86' fill='#1a1a1a'/><rect x='86.65' y='14.87' width='3.71' height='2.86' fill='#2b2b2b'/><rect x='91.85' y='0.00' width='3.90' height='3.15' fill='#333'/><rect x='91.85' y='8.87' width='3.90' height='3.15' fill='#d5d5d5'/><rect x='95.76' y='8.87' width='3.90' height='3.15' fill='#333'/><rect x='91.85' y='16.55' width='3.90' height='3.15' fill='#2b2b2b'/><rect x='95.76' y='16.55' width='3.90' height='3.15' fill='#1a1a1a'/><rect x='99.66' y='16.55' width='3.90' height='3.15' fill='#222'/><rect x='91.85' y='3.15' width='3.71' height='2.86' fill='#333'/><rect x='91.85' y='6.01' width='3.71' height='2.86' fill='#1a1a1a'/><rect x='91.85' y='12.02' width='3.71' height='2.86' fill='#2b2b2b'/><rect x='91.85' y='14.87' width='3.71' height='2.86' fill='#444'/><rect x='99.66' y='12.02' width='3.71' height='2.86' fill='#222'/><rect x='99.66' y='14.87' width='3.71' height='2.86' fill='#222'/><rect x='104.86' y='0.00' width='3.90' height='3.15' fill='#1a1a1a'/><rect x='108.76' y='0.00' width='3.90' height='3.15' fill='#333'/><rect x='112.67' y='0.00' width='3.90' height='3.15' fill='#444'/><rect x='104.86' y='8.87' width='3.90' height='3.15' fill='#333'/><rect x='108.76' y='8.87' width='3.90' height='3.15' fill='#444'/><rect x='112.67' y='8.87' width='3.90' height='3.15' fill='#222'/><rect x='104.86' y='16.55' width='3.90' height='3.15' fill='#444'/><rect x='108.76' y='16.55' width='3.90' height='3.15' fill='#bbb'/><rect x='112.67' y='16.55' width='3.90' height='3.15' fill='#444'/><rect x='112.67' y='3.15' width='3.71' height='2.86' fill='#222'/><rect x='112.67' y='6.01' width='3.71' height='2.86' fill='#222'/><rect x='104.86' y='12.02' width='3.71' height='2.86' fill='#1a1a1a'/><rect x='104.86' y='14.87' width='3.71' height='2.86' fill='#1a1a1a'/><rect x='117.87' y='0.00' width='3.90' height='3.15' fill='#999'/><rect x='121.77' y='0.00' width='3.90' height='3.15' fill='#777'/><rect x='125.67' y='0.00' width='3.90' height='3.15' fill='#777'/><rect x='117.87' y='8.87' width='3.90' height='3.15' fill='#222'/><rect x='121.77' y='8.87' width='3.90' height='3.15' fill='#2b2b2b'/><rect x='125.67' y='8.87' width='3.90' height='3.15' fill='#444'/><rect x='117.87' y='16.55' width='3.90' height='3.15' fill='#222'/><rect x='121.77' y='16.55' width='3.90' height='3.15' fill='#2b2b2b'/><rect x='125.67' y='16.55' width='3.90' height='3.15' fill='#333'/><rect x='117.87' y='3.15' width='3.71' height='2.86' fill='#333'/><rect x='117.87' y='6.01' width='3.71' height='2.86' fill='#333'/><rect x='125.67' y='12.02' width='3.71' height='2.86' fill='#222'/><rect x='125.67' y='14.87' width='3.71' height='2.86' fill='#444'/><rect x='130.88' y='0.00' width='3.90' height='3.15' fill='#333'/><rect x='134.78' y='0.00' width='3.90' height='3.15' fill='#1a1a1a'/><rect x='138.68' y='0.00' width='3.90' height='3.15' fill='#bbb'/><rect x='130.88' y='8.87' width='3.90' height='3.15' fill='#1a1a1a'/><rect x='134.78' y='8.87' width='3.90' height='3.15' fill='#333'/><rect x='138.68' y='8.87' width='3.90' height='3.15' fill='#222'/><rect x='130.88' y='16.55' width='3.90' height='3.15' fill='#222'/><rect x='134.78' y='16.55' width='3.90' height='3.15' fill='#444'/><rect x='138.68' y='16.55' width='3.90' height='3.15' fill='#444'/><rect x='130.88' y='3.15' width='3.71' height='2.86' fill='#222'/><rect x='130.88' y='6.01' width='3.71' height='2.86' fill='#2b2b2b'/><rect x='138.68' y='6.01' width='3.71' height='2.86' fill='#bbb'/><rect x='138.68' y='12.02' width='3.71' height='2.86' fill='#222'/><rect x='138.68' y='14.87' width='3.71' height='2.86' fill='#222'/><rect x='151.69' y='3.15' width='3.71' height='2.86' fill='#444'/><rect x='151.69' y='6.01' width='3.71' height='2.86' fill='#222'/><rect x='151.69' y='12.02' width='3.71' height='2.86' fill='#1a1a1a'/><rect x='151.69' y='14.87' width='3.71' height='2.86' fill='#2b2b2b'/><rect x='156.89' y='0.00' width='3.90' height='3.15' fill='#333'/><rect x='160.79' y='0.00' width='3.90' height='3.15' fill='#333'/><rect x='164.70' y='0.00' width='3.90' height='3.15' fill='#1a1a1a'/><rect x='156.89' y='8.87' width='3.90' height='3.15' fill='#1a1a1a'/><rect x='160.79' y='8.87' width='3.90' height='3.15' fill='#1a1a1a'/><rect x='164.70' y='8.87' width='3.90' height='3.15' fill='#333'/><rect x='156.89' y='16.55' width='3.90' height='3.15' fill='#333'/><rect x='160.79' y='16.55' width='3.90' height='3.15' fill='#333'/><rect x='164.70' y='16.55' width='3.90' height='3.15' fill='#444'/><rect x='156.89' y='3.15' width='3.71' height='2.86' fill='#444'/><rect x='156.89' y='6.01' width='3.71' height='2.86' fill='#333'/><rect x='164.70' y='3.15' width='3.71' height='2.86' fill='#222'/><rect x='164.70' y='6.01' width='3.71' height='2.86' fill='#444'/><rect x='156.89' y='12.02' width='3.71' height='2.86' fill='#bbb'/><rect x='156.89' y='14.87' width='3.71' height='2.86' fill='#222'/><rect x='164.70' y='12.02' width='3.71' height='2.86' fill='#777'/><rect x='164.70' y='14.87' width='3.71' height='2.86' fill='#2b2b2b'/></svg>
<div class='a' style='left:688px;top:1271.8999999999999px;width:900.1999999999998px;height:429.10000000000014px;background:#fff;border:2px solid #d9d9d9;border-radius:16px;box-sizing:border-box'></div>
<svg class='a' style='left:714px;top:1298px' width='128' height='128' viewBox='43 55 1382 1380'>
<defs><linearGradient id='ag7141298' x1='0' y1='0' x2='0' y2='1'><stop offset='0' stop-color='#969dac'/><stop offset='1' stop-color='#7a8092'/></linearGradient></defs>
<rect x='43' y='55' width='1382' height='1380' rx='110' fill='url(#ag7141298)'/>
<g fill='none' stroke='#eff0f3' stroke-width='50'>
<ellipse cx='740' cy='744' rx='209' ry='505'/>
<ellipse cx='740' cy='744' rx='209' ry='505' transform='rotate(60 740 744)'/>
<ellipse cx='740' cy='744' rx='209' ry='505' transform='rotate(-60 740 744)'/>
</g>
<path d='M740 645 L832 697 L832 790 L740 842 L648 790 L648 697 Z' fill='#f2f3f5'/>
<path d='M648 697 L740 749 L832 697 M740 749 L740 842' fill='none' stroke='#8d93a1' stroke-width='16'/>
</svg>
<div class='t' style='left:867.19px;top:1302.20px;font-size:32.5px;line-height:32.5px;font-weight:700;color:#3c3c3c;transform:scaleX(0.9083);transform-origin:0 0;'>2023_2Q_NEW_NONE_APP</div>
<div class='t' style='left:866.40px;top:1341.90px;font-size:24.4px;line-height:24.4px;font-weight:400;color:#1c1e21;transform:scaleX(0.9482);transform-origin:0 0;'>App ID: 77</div>
<div class='t' style='left:866.26px;top:1374.00px;font-size:24.4px;line-height:24.4px;font-weight:400;color:#1c1e21;transform:scaleX(0.9698);transform-origin:0 0;'>Mode: Live</div>
<div class='t' style='left:866.40px;top:1406.10px;font-size:24.4px;line-height:24.4px;font-weight:400;color:#1c1e21;transform:scaleX(0.9508);transform-origin:0 0;'>Type: None</div>
<div class='a' style='left:1514.1px;top:1298px;width:47.799999999999955px;height:48px;border:2px solid #d6d6d6;border-radius:12px;box-sizing:border-box;background:#fff'></div>
<div class='a' style='left:691px;top:1561.7px;width:894.5999999999999px;height:2.0px;background:#ececec'></div>
<svg class='a' style='left:710.5px;top:1583.5px' width='32' height='36' viewBox='0 0 32 36'>
<path d='M15.5 1.8 C12.3 4.6 8.5 6.2 2.7 7.1 L2.7 17.9 C2.7 25 8 29 15.5 31 C23 29 28.2 25 28.2 17.9 L28.2 7.1 C22.5 6.2 18.7 4.6 15.5 1.8 Z' fill='none' stroke='#3a3a3a' stroke-width='2.2' stroke-linejoin='round'/>
<path d='M15.5 9.8 L17.15 14.13 L21.78 14.36 L18.16 17.27 L19.38 21.74 L15.5 19.2 L11.62 21.74 L12.84 17.27 L9.22 14.36 L13.85 14.13 Z' fill='#3a3a3a' stroke='#3a3a3a' stroke-width='0.7' stroke-linejoin='round'/>
</svg>
<div class='t' style='left:746.70px;top:1585.00px;font-size:28.5px;line-height:28.5px;font-weight:400;color:#1c1e21;'>Administrator</div>
<div class='a' style='left:1516.8px;top:1596.9px;width:6.2px;height:6.2px;border-radius:50%;background:#1c1e21'></div>
<div class='a' style='left:1526.8px;top:1596.9px;width:6.2px;height:6.2px;border-radius:50%;background:#1c1e21'></div>
<div class='a' style='left:1536.8px;top:1596.9px;width:6.2px;height:6.2px;border-radius:50%;background:#1c1e21'></div>
<svg class='a' style='left:974.8px;top:1345.6px' width='180.9' height='18.7'><rect x='0.80' y='0.00' width='3.88' height='2.99' fill='#444'/><rect x='8.55' y='0.00' width='3.88' height='2.99' fill='#777'/><rect x='0.80' y='8.42' width='3.88' height='2.99' fill='#333'/><rect x='4.68' y='8.42' width='3.88' height='2.99' fill='#1a1a1a'/><rect x='8.55' y='8.42' width='3.88' height='2.99' fill='#222'/><rect x='0.80' y='15.71' width='3.88' height='2.99' fill='#333'/><rect x='4.68' y='15.71' width='3.88' height='2.99' fill='#222'/><rect x='8.55' y='15.71' width='3.88' height='2.99' fill='#222'/><rect x='0.80' y='5.70' width='3.68' height='2.71' fill='#222'/><rect x='8.55' y='2.99' width='3.68' height='2.71' fill='#222'/><rect x='8.55' y='5.70' width='3.68' height='2.71' fill='#999'/><rect x='8.55' y='11.41' width='3.68' height='2.71' fill='#999'/><rect x='8.55' y='14.12' width='3.68' height='2.71' fill='#bbb'/><rect x='13.72' y='0.00' width='3.88' height='2.99' fill='#222'/><rect x='17.60' y='0.00' width='3.88' height='2.99' fill='#444'/><rect x='21.47' y='0.00' width='3.88' height='2.99' fill='#2b2b2b'/><rect x='17.60' y='15.71' width='3.88' height='2.99' fill='#2b2b2b'/><rect x='21.47' y='15.71' width='3.88' height='2.99' fill='#222'/><rect x='13.72' y='5.70' width='3.68' height='2.71' fill='#2b2b2b'/><rect x='21.47' y='2.99' width='3.68' height='2.71' fill='#333'/><rect x='21.47' y='5.70' width='3.68' height='2.71' fill='#1a1a1a'/><rect x='13.72' y='11.41' width='3.68' height='2.71' fill='#444'/><rect x='13.72' y='14.12' width='3.68' height='2.71' fill='#222'/><rect x='21.47' y='11.41' width='3.68' height='2.71' fill='#bbb'/><rect x='21.47' y='14.12' width='3.68' height='2.71' fill='#bbb'/><rect x='30.52' y='0.00' width='3.88' height='2.99' fill='#2b2b2b'/><rect x='34.40' y='2.99' width='3.68' height='2.71' fill='#2b2b2b'/><rect x='34.40' y='5.70' width='3.68' height='2.71' fill='#222'/><rect x='34.40' y='11.41' width='3.68' height='2.71' fill='#777'/><rect x='34.40' y='14.12' width='3.68' height='2.71' fill='#222'/><rect x='47.32' y='2.99' width='3.68' height='2.71' fill='#2b2b2b'/><rect x='47.32' y='5.70' width='3.68' height='2.71' fill='#1a1a1a'/><rect x='47.32' y='14.12' width='3.68' height='2.71' fill='#777'/><rect x='52.49' y='0.00' width='3.88' height='2.99' fill='#2b2b2b'/><rect x='56.36' y='0.00' width='3.88' height='2.99' fill='#1a1a1a'/><rect x='60.24' y='0.00' width='3.88' height='2.99' fill='#333'/><rect x='52.49' y='8.42' width='3.88' height='2.99' fill='#444'/><rect x='56.36' y='8.42' width='3.88' height='2.99' fill='#333'/><rect x='52.49' y='15.71' width='3.88' height='2.99' fill='#333'/><rect x='56.36' y='15.71' width='3.88' height='2.99' fill='#444'/><rect x='60.24' y='15.71' width='3.88' height='2.99' fill='#d5d5d5'/><rect x='60.24' y='2.99' width='3.68' height='2.71' fill='#2b2b2b'/><rect x='60.24' y='5.70' width='3.68' height='2.71' fill='#333'/><rect x='60.24' y='11.41' width='3.68' height='2.71' fill='#444'/><rect x='60.24' y='14.12' width='3.68' height='2.71' fill='#333'/><rect x='65.41' y='0.00' width='3.88' height='2.99' fill='#444'/><rect x='69.28' y='0.00' width='3.88' height='2.99' fill='#bbb'/><rect x='65.41' y='8.42' width='3.88' height='2.99' fill='#444'/><rect x='69.28' y='8.42' width='3.88' height='2.99' fill='#2b2b2b'/><rect x='73.16' y='8.42' width='3.88' height='2.99' fill='#333'/><rect x='65.41' y='15.71' width='3.88' height='2.99' fill='#bbb'/><rect x='69.28' y='15.71' width='3.88' height='2.99' fill='#222'/><rect x='73.16' y='15.71' width='3.88' height='2.99' fill='#444'/><rect x='65.41' y='2.99' width='3.68' height='2.71' fill='#2b2b2b'/><rect x='65.41' y='5.70' width='3.68' height='2.71' fill='#2b2b2b'/><rect x='73.16' y='11.41' width='3.68' height='2.71' fill='#333'/><rect x='73.16' y='14.12' width='3.68' height='2.71' fill='#333'/><rect x='78.33' y='0.00' width='3.88' height='2.99' fill='#444'/><rect x='82.21' y='0.00' width='3.88' height='2.99' fill='#2b2b2b'/><rect x='86.08' y='0.00' width='3.88' height='2.99' fill='#1a1a1a'/><rect x='78.33' y='8.42' width='3.88' height='2.99' fill='#222'/><rect x='82.21' y='8.42' width='3.88' height='2.99' fill='#d5d5d5'/><rect x='86.08' y='8.42' width='3.88' height='2.99' fill='#2b2b2b'/><rect x='78.33' y='15.71' width='3.88' height='2.99' fill='#222'/><rect x='82.21' y='15.71' width='3.88' height='2.99' fill='#222'/><rect x='86.08' y='15.71' width='3.88' height='2.99' fill='#1a1a1a'/><rect x='78.33' y='2.99' width='3.68' height='2.71' fill='#999'/><rect x='86.08' y='11.41' width='3.68' height='2.71' fill='#222'/><rect x='86.08' y='14.12' width='3.68' height='2.71' fill='#333'/><rect x='91.25' y='0.00' width='3.88' height='2.99' fill='#1a1a1a'/><rect x='95.13' y='0.00' width='3.88' height='2.99' fill='#2b2b2b'/><rect x='99.00' y='2.99' width='3.68' height='2.71' fill='#333'/><rect x='99.00' y='5.70' width='3.68' height='2.71' fill='#444'/><rect x='99.00' y='11.41' width='3.68' height='2.71' fill='#444'/><rect x='99.00' y='14.12' width='3.68' height='2.71' fill='#444'/><rect x='104.17' y='0.00' width='3.88' height='2.99' fill='#2b2b2b'/><rect x='108.05' y='0.00' width='3.88' height='2.99' fill='#444'/><rect x='111.92' y='0.00' width='3.88' height='2.99' fill='#222'/><rect x='104.17' y='8.42' width='3.88' height='2.99' fill='#333'/><rect x='108.05' y='8.42' width='3.88' height='2.99' fill='#777'/><rect x='111.92' y='8.42' width='3.88' height='2.99' fill='#777'/><rect x='104.17' y='15.71' width='3.88' height='2.99' fill='#444'/><rect x='108.05' y='15.71' width='3.88' height='2.99' fill='#444'/><rect x='111.92' y='15.71' width='3.88' height='2.99' fill='#222'/><rect x='104.17' y='2.99' width='3.68' height='2.71' fill='#333'/><rect x='104.17' y='5.70' width='3.68' height='2.71' fill='#222'/><rect x='111.92' y='11.41' width='3.68' height='2.71' fill='#2b2b2b'/><rect x='111.92' y='14.12' width='3.68' height='2.71' fill='#2b2b2b'/><rect x='117.09' y='8.42' width='3.88' height='2.99' fill='#333'/><rect x='124.85' y='8.42' width='3.88' height='2.99' fill='#999'/><rect x='117.09' y='2.99' width='3.68' height='2.71' fill='#333'/><rect x='124.85' y='2.99' width='3.68' height='2.71' fill='#333'/><rect x='124.85' y='5.70' width='3.68' height='2.71' fill='#2b2b2b'/><rect x='124.85' y='11.41' width='3.68' height='2.71' fill='#2b2b2b'/><rect x='124.85' y='14.12' width='3.68' height='2.71' fill='#333'/><rect x='130.01' y='0.00' width='3.88' height='2.99' fill='#1a1a1a'/><rect x='137.77' y='0.00' width='3.88' height='2.99' fill='#2b2b2b'/><rect x='130.01' y='8.42' width='3.88' height='2.99' fill='#1a1a1a'/><rect x='133.89' y='8.42' width='3.88' height='2.99' fill='#444'/><rect x='137.77' y='8.42' width='3.88' height='2.99' fill='#444'/><rect x='130.01' y='15.71' width='3.88' height='2.99' fill='#999'/><rect x='137.77' y='15.71' width='3.88' height='2.99' fill='#444'/><rect x='130.01' y='2.99' width='3.68' height='2.71' fill='#d5d5d5'/><rect x='130.01' y='5.70' width='3.68' height='2.71' fill='#333'/><rect x='137.77' y='2.99' width='3.68' height='2.71' fill='#222'/><rect x='137.77' y='5.70' width='3.68' height='2.71' fill='#1a1a1a'/><rect x='130.01' y='11.41' width='3.68' height='2.71' fill='#333'/><rect x='130.01' y='14.12' width='3.68' height='2.71' fill='#333'/><rect x='137.77' y='11.41' width='3.68' height='2.71' fill='#333'/><rect x='137.77' y='14.12' width='3.68' height='2.71' fill='#bbb'/><rect x='142.94' y='0.00' width='3.88' height='2.99' fill='#1a1a1a'/><rect x='150.69' y='0.00' width='3.88' height='2.99' fill='#1a1a1a'/><rect x='142.94' y='8.42' width='3.88' height='2.99' fill='#333'/><rect x='146.81' y='8.42' width='3.88' height='2.99' fill='#d5d5d5'/><rect x='142.94' y='15.71' width='3.88' height='2.99' fill='#1a1a1a'/><rect x='146.81' y='15.71' width='3.88' height='2.99' fill='#2b2b2b'/><rect x='150.69' y='15.71' width='3.88' height='2.99' fill='#222'/><rect x='142.94' y='2.99' width='3.68' height='2.71' fill='#222'/><rect x='150.69' y='2.99' width='3.68' height='2.71' fill='#333'/><rect x='150.69' y='5.70' width='3.68' height='2.71' fill='#444'/><rect x='142.94' y='11.41' width='3.68' height='2.71' fill='#444'/><rect x='142.94' y='14.12' width='3.68' height='2.71' fill='#2b2b2b'/><rect x='150.69' y='11.41' width='3.68' height='2.71' fill='#2b2b2b'/><rect x='150.69' y='14.12' width='3.68' height='2.71' fill='#1a1a1a'/><rect x='155.86' y='0.00' width='3.88' height='2.99' fill='#444'/><rect x='159.73' y='0.00' width='3.88' height='2.99' fill='#999'/><rect x='163.61' y='0.00' width='3.88' height='2.99' fill='#2b2b2b'/><rect x='155.86' y='8.42' width='3.88' height='2.99' fill='#222'/><rect x='159.73' y='8.42' width='3.88' height='2.99' fill='#d5d5d5'/><rect x='163.61' y='8.42' width='3.88' height='2.99' fill='#1a1a1a'/><rect x='155.86' y='15.71' width='3.88' height='2.99' fill='#1a1a1a'/><rect x='163.61' y='15.71' width='3.88' height='2.99' fill='#222'/><rect x='163.61' y='2.99' width='3.68' height='2.71' fill='#2b2b2b'/><rect x='155.86' y='11.41' width='3.68' height='2.71' fill='#333'/><rect x='168.78' y='0.00' width='3.88' height='2.99' fill='#222'/><rect x='172.66' y='0.00' width='3.88' height='2.99' fill='#333'/><rect x='176.53' y='0.00' width='3.88' height='2.99' fill='#444'/><rect x='168.78' y='8.42' width='3.88' height='2.99' fill='#2b2b2b'/><rect x='172.66' y='8.42' width='3.88' height='2.99' fill='#2b2b2b'/><rect x='176.53' y='8.42' width='3.88' height='2.99' fill='#2b2b2b'/><rect x='168.78' y='15.71' width='3.88' height='2.99' fill='#333'/><rect x='172.66' y='15.71' width='3.88' height='2.99' fill='#1a1a1a'/><rect x='176.53' y='15.71' width='3.88' height='2.99' fill='#222'/><rect x='176.53' y='2.99' width='3.68' height='2.71' fill='#1a1a1a'/><rect x='176.53' y='5.70' width='3.68' height='2.71' fill='#333'/><rect x='168.78' y='11.41' width='3.68' height='2.71' fill='#2b2b2b'/></svg>
<div class='a' style='left:1619.8px;top:1271.8999999999999px;width:899.8px;height:429.10000000000014px;background:#fff;border:2px solid #d9d9d9;border-radius:16px;box-sizing:border-box'></div>
<svg class='a' style='left:1645.8px;top:1298px' width='128' height='128' viewBox='43 55 1382 1380'>
<defs><linearGradient id='ag1645.81298' x1='0' y1='0' x2='0' y2='1'><stop offset='0' stop-color='#969dac'/><stop offset='1' stop-color='#7a8092'/></linearGradient></defs>
<rect x='43' y='55' width='1382' height='1380' rx='110' fill='url(#ag1645.81298)'/>
<g fill='none' stroke='#eff0f3' stroke-width='50'>
<ellipse cx='740' cy='744' rx='209' ry='505'/>
<ellipse cx='740' cy='744' rx='209' ry='505' transform='rotate(60 740 744)'/>
<ellipse cx='740' cy='744' rx='209' ry='505' transform='rotate(-60 740 744)'/>
</g>
<path d='M740 645 L832 697 L832 790 L740 842 L648 790 L648 697 Z' fill='#f2f3f5'/>
<path d='M648 697 L740 749 L832 697 M740 749 L740 842' fill='none' stroke='#8d93a1' stroke-width='16'/>
</svg>
<div class='t' style='left:1798.04px;top:1301.70px;font-size:32.5px;line-height:32.5px;font-weight:700;color:#3c3c3c;transform:scaleX(0.9288);transform-origin:0 0;'>Hive</div>
<div class='t' style='left:1798.20px;top:1341.90px;font-size:24.4px;line-height:24.4px;font-weight:400;color:#1c1e21;transform:scaleX(0.9400);transform-origin:0 0;'>App ID: 30</div>
<div class='t' style='left:1798.05px;top:1374.00px;font-size:24.4px;line-height:24.4px;font-weight:400;color:#1c1e21;transform:scaleX(0.9749);transform-origin:0 0;'>Mode: In development</div>
<div class='t' style='left:1798.20px;top:1406.10px;font-size:24.4px;line-height:24.4px;font-weight:400;color:#1c1e21;transform:scaleX(0.9598);transform-origin:0 0;'>Type: Consumer</div>
<div class='a' style='left:2445.5px;top:1298px;width:47.80000000000018px;height:48px;border:2px solid #d6d6d6;border-radius:12px;box-sizing:border-box;background:#fff'></div>
<div class='a' style='left:1622.8px;top:1561.7px;width:894.2px;height:2.0px;background:#ececec'></div>
<svg class='a' style='left:1642.3px;top:1583.5px' width='32' height='36' viewBox='0 0 32 36'>
<path d='M15.5 1.8 C12.3 4.6 8.5 6.2 2.7 7.1 L2.7 17.9 C2.7 25 8 29 15.5 31 C23 29 28.2 25 28.2 17.9 L28.2 7.1 C22.5 6.2 18.7 4.6 15.5 1.8 Z' fill='none' stroke='#3a3a3a' stroke-width='2.2' stroke-linejoin='round'/>
<path d='M15.5 9.8 L17.15 14.13 L21.78 14.36 L18.16 17.27 L19.38 21.74 L15.5 19.2 L11.62 21.74 L12.84 17.27 L9.22 14.36 L13.85 14.13 Z' fill='#3a3a3a' stroke='#3a3a3a' stroke-width='0.7' stroke-linejoin='round'/>
</svg>
<div class='t' style='left:1678.50px;top:1585.00px;font-size:28.5px;line-height:28.5px;font-weight:400;color:#1c1e21;'>Administrator</div>
<div class='a' style='left:2448.2px;top:1596.9px;width:6.2px;height:6.2px;border-radius:50%;background:#1c1e21'></div>
<div class='a' style='left:2458.2px;top:1596.9px;width:6.2px;height:6.2px;border-radius:50%;background:#1c1e21'></div>
<div class='a' style='left:2468.2px;top:1596.9px;width:6.2px;height:6.2px;border-radius:50%;background:#1c1e21'></div>
<svg class='a' style='left:1906.6px;top:1344.5px' width='186.8' height='20.9'><rect x='0.80' y='0.00' width='4.00' height='3.34' fill='#2b2b2b'/><rect x='8.81' y='0.00' width='4.00' height='3.34' fill='#2b2b2b'/><rect x='0.80' y='9.41' width='4.00' height='3.34' fill='#333'/><rect x='4.80' y='9.41' width='4.00' height='3.34' fill='#333'/><rect x='8.81' y='9.41' width='4.00' height='3.34' fill='#1a1a1a'/><rect x='0.80' y='17.56' width='4.00' height='3.34' fill='#2b2b2b'/><rect x='4.80' y='17.56' width='4.00' height='3.34' fill='#1a1a1a'/><rect x='8.81' y='17.56' width='4.00' height='3.34' fill='#1a1a1a'/><rect x='0.80' y='3.34' width='3.80' height='3.03' fill='#2b2b2b'/><rect x='0.80' y='6.37' width='3.80' height='3.03' fill='#222'/><rect x='8.81' y='3.34' width='3.80' height='3.03' fill='#1a1a1a'/><rect x='8.81' y='6.37' width='3.80' height='3.03' fill='#222'/><rect x='8.81' y='12.75' width='3.80' height='3.03' fill='#d5d5d5'/><rect x='8.81' y='15.78' width='3.80' height='3.03' fill='#777'/><rect x='14.14' y='0.00' width='4.00' height='3.34' fill='#2b2b2b'/><rect x='18.15' y='0.00' width='4.00' height='3.34' fill='#444'/><rect x='22.15' y='0.00' width='4.00' height='3.34' fill='#2b2b2b'/><rect x='14.14' y='9.41' width='4.00' height='3.34' fill='#333'/><rect x='18.15' y='9.41' width='4.00' height='3.34' fill='#444'/><rect x='14.14' y='17.56' width='4.00' height='3.34' fill='#2b2b2b'/><rect x='18.15' y='17.56' width='4.00' height='3.34' fill='#444'/><rect x='22.15' y='17.56' width='4.00' height='3.34' fill='#333'/><rect x='14.14' y='3.34' width='3.80' height='3.03' fill='#333'/><rect x='22.15' y='12.75' width='3.80' height='3.03' fill='#333'/><rect x='27.49' y='0.00' width='4.00' height='3.34' fill='#d5d5d5'/><rect x='31.49' y='0.00' width='4.00' height='3.34' fill='#1a1a1a'/><rect x='35.49' y='0.00' width='4.00' height='3.34' fill='#333'/><rect x='35.49' y='3.34' width='3.80' height='3.03' fill='#2b2b2b'/><rect x='35.49' y='6.37' width='3.80' height='3.03' fill='#222'/><rect x='35.49' y='15.78' width='3.80' height='3.03' fill='#2b2b2b'/><rect x='40.83' y='0.00' width='4.00' height='3.34' fill='#444'/><rect x='44.83' y='0.00' width='4.00' height='3.34' fill='#333'/><rect x='48.83' y='0.00' width='4.00' height='3.34' fill='#333'/><rect x='40.83' y='9.41' width='4.00' height='3.34' fill='#333'/><rect x='44.83' y='9.41' width='4.00' height='3.34' fill='#333'/><rect x='48.83' y='9.41' width='4.00' height='3.34' fill='#444'/><rect x='40.83' y='17.56' width='4.00' height='3.34' fill='#2b2b2b'/><rect x='44.83' y='17.56' width='4.00' height='3.34' fill='#999'/><rect x='48.83' y='17.56' width='4.00' height='3.34' fill='#1a1a1a'/><rect x='48.83' y='3.34' width='3.80' height='3.03' fill='#999'/><rect x='48.83' y='12.75' width='3.80' height='3.03' fill='#2b2b2b'/><rect x='48.83' y='15.78' width='3.80' height='3.03' fill='#777'/><rect x='54.17' y='0.00' width='4.00' height='3.34' fill='#1a1a1a'/><rect x='58.17' y='0.00' width='4.00' height='3.34' fill='#444'/><rect x='62.18' y='0.00' width='4.00' height='3.34' fill='#1a1a1a'/><rect x='54.17' y='9.41' width='4.00' height='3.34' fill='#999'/><rect x='58.17' y='9.41' width='4.00' height='3.34' fill='#1a1a1a'/><rect x='62.18' y='9.41' width='4.00' height='3.34' fill='#333'/><rect x='54.17' y='17.56' width='4.00' height='3.34' fill='#777'/><rect x='58.17' y='17.56' width='4.00' height='3.34' fill='#1a1a1a'/><rect x='62.18' y='17.56' width='4.00' height='3.34' fill='#2b2b2b'/><rect x='62.18' y='3.34' width='3.80' height='3.03' fill='#d5d5d5'/><rect x='62.18' y='6.37' width='3.80' height='3.03' fill='#222'/><rect x='62.18' y='12.75' width='3.80' height='3.03' fill='#333'/><rect x='62.18' y='15.78' width='3.80' height='3.03' fill='#444'/><rect x='67.51' y='9.41' width='4.00' height='3.34' fill='#2b2b2b'/><rect x='71.52' y='9.41' width='4.00' height='3.34' fill='#1a1a1a'/><rect x='67.51' y='3.34' width='3.80' height='3.03' fill='#333'/><rect x='67.51' y='6.37' width='3.80' height='3.03' fill='#777'/><rect x='75.52' y='3.34' width='3.80' height='3.03' fill='#444'/><rect x='75.52' y='6.37' width='3.80' height='3.03' fill='#1a1a1a'/><rect x='75.52' y='12.75' width='3.80' height='3.03' fill='#1a1a1a'/><rect x='80.86' y='0.00' width='4.00' height='3.34' fill='#1a1a1a'/><rect x='84.86' y='0.00' width='4.00' height='3.34' fill='#333'/><rect x='88.86' y='0.00' width='4.00' height='3.34' fill='#333'/><rect x='80.86' y='9.41' width='4.00' height='3.34' fill='#2b2b2b'/><rect x='84.86' y='9.41' width='4.00' height='3.34' fill='#444'/><rect x='88.86' y='9.41' width='4.00' height='3.34' fill='#222'/><rect x='80.86' y='17.56' width='4.00' height='3.34' fill='#222'/><rect x='84.86' y='17.56' width='4.00' height='3.34' fill='#222'/><rect x='88.86' y='17.56' width='4.00' height='3.34' fill='#2b2b2b'/><rect x='88.86' y='3.34' width='3.80' height='3.03' fill='#1a1a1a'/><rect x='88.86' y='6.37' width='3.80' height='3.03' fill='#222'/><rect x='88.86' y='12.75' width='3.80' height='3.03' fill='#444'/><rect x='88.86' y='15.78' width='3.80' height='3.03' fill='#444'/><rect x='94.20' y='0.00' width='4.00' height='3.34' fill='#222'/><rect x='98.20' y='0.00' width='4.00' height='3.34' fill='#2b2b2b'/><rect x='102.21' y='0.00' width='4.00' height='3.34' fill='#222'/><rect x='94.20' y='9.41' width='4.00' height='3.34' fill='#333'/><rect x='94.20' y='17.56' width='4.00' height='3.34' fill='#444'/><rect x='102.21' y='17.56' width='4.00' height='3.34' fill='#444'/><rect x='94.20' y='3.34' width='3.80' height='3.03' fill='#444'/><rect x='94.20' y='6.37' width='3.80' height='3.03' fill='#777'/><rect x='102.21' y='3.34' width='3.80' height='3.03' fill='#1a1a1a'/><rect x='102.21' y='6.37' width='3.80' height='3.03' fill='#1a1a1a'/><rect x='94.20' y='12.75' width='3.80' height='3.03' fill='#222'/><rect x='102.21' y='12.75' width='3.80' height='3.03' fill='#333'/><rect x='102.21' y='15.78' width='3.80' height='3.03' fill='#333'/><rect x='107.54' y='0.00' width='4.00' height='3.34' fill='#444'/><rect x='111.55' y='0.00' width='4.00' height='3.34' fill='#444'/><rect x='107.54' y='9.41' width='4.00' height='3.34' fill='#2b2b2b'/><rect x='111.55' y='9.41' width='4.00' height='3.34' fill='#444'/><rect x='115.55' y='9.41' width='4.00' height='3.34' fill='#1a1a1a'/><rect x='107.54' y='17.56' width='4.00' height='3.34' fill='#2b2b2b'/><rect x='111.55' y='17.56' width='4.00' height='3.34' fill='#d5d5d5'/><rect x='115.55' y='17.56' width='4.00' height='3.34' fill='#bbb'/><rect x='115.55' y='3.34' width='3.80' height='3.03' fill='#1a1a1a'/><rect x='115.55' y='6.37' width='3.80' height='3.03' fill='#2b2b2b'/><rect x='115.55' y='15.78' width='3.80' height='3.03' fill='#222'/><rect x='120.89' y='0.00' width='4.00' height='3.34' fill='#333'/><rect x='124.89' y='0.00' width='4.00' height='3.34' fill='#444'/><rect x='128.89' y='0.00' width='4.00' height='3.34' fill='#2b2b2b'/><rect x='120.89' y='9.41' width='4.00' height='3.34' fill='#1a1a1a'/><rect x='124.89' y='9.41' width='4.00' height='3.34' fill='#222'/><rect x='128.89' y='9.41' width='4.00' height='3.34' fill='#777'/><rect x='120.89' y='17.56' width='4.00' height='3.34' fill='#444'/><rect x='124.89' y='17.56' width='4.00' height='3.34' fill='#444'/><rect x='128.89' y='17.56' width='4.00' height='3.34' fill='#333'/><rect x='128.89' y='3.34' width='3.80' height='3.03' fill='#333'/><rect x='128.89' y='6.37' width='3.80' height='3.03' fill='#777'/><rect x='120.89' y='12.75' width='3.80' height='3.03' fill='#222'/><rect x='120.89' y='15.78' width='3.80' height='3.03' fill='#2b2b2b'/><rect x='138.23' y='0.00' width='4.00' height='3.34' fill='#444'/><rect x='142.23' y='0.00' width='4.00' height='3.34' fill='#1a1a1a'/><rect x='134.23' y='9.41' width='4.00' height='3.34' fill='#222'/><rect x='138.23' y='9.41' width='4.00' height='3.34' fill='#d5d5d5'/><rect x='142.23' y='9.41' width='4.00' height='3.34' fill='#bbb'/><rect x='134.23' y='17.56' width='4.00' height='3.34' fill='#2b2b2b'/><rect x='138.23' y='17.56' width='4.00' height='3.34' fill='#1a1a1a'/><rect x='142.23' y='17.56' width='4.00' height='3.34' fill='#444'/><rect x='142.23' y='3.34' width='3.80' height='3.03' fill='#222'/><rect x='142.23' y='6.37' width='3.80' height='3.03' fill='#1a1a1a'/><rect x='142.23' y='15.78' width='3.80' height='3.03' fill='#222'/><rect x='147.57' y='0.00' width='4.00' height='3.34' fill='#999'/><rect x='151.57' y='0.00' width='4.00' height='3.34' fill='#222'/><rect x='155.58' y='0.00' width='4.00' height='3.34' fill='#333'/><rect x='147.57' y='9.41' width='4.00' height='3.34' fill='#222'/><rect x='151.57' y='9.41' width='4.00' height='3.34' fill='#444'/><rect x='155.58' y='9.41' width='4.00' height='3.34' fill='#2b2b2b'/><rect x='147.57' y='17.56' width='4.00' height='3.34' fill='#bbb'/><rect x='151.57' y='17.56' width='4.00' height='3.34' fill='#1a1a1a'/><rect x='155.58' y='17.56' width='4.00' height='3.34' fill='#2b2b2b'/><rect x='147.57' y='6.37' width='3.80' height='3.03' fill='#333'/><rect x='155.58' y='12.75' width='3.80' height='3.03' fill='#2b2b2b'/><rect x='155.58' y='15.78' width='3.80' height='3.03' fill='#2b2b2b'/><rect x='160.91' y='0.00' width='4.00' height='3.34' fill='#444'/><rect x='164.92' y='0.00' width='4.00' height='3.34' fill='#333'/><rect x='168.92' y='0.00' width='4.00' height='3.34' fill='#999'/><rect x='168.92' y='3.34' width='3.80' height='3.03' fill='#1a1a1a'/><rect x='168.92' y='6.37' width='3.80' height='3.03' fill='#222'/><rect x='168.92' y='12.75' width='3.80' height='3.03' fill='#999'/><rect x='168.92' y='15.78' width='3.80' height='3.03' fill='#444'/><rect x='174.26' y='0.00' width='4.00' height='3.34' fill='#2b2b2b'/><rect x='178.26' y='0.00' width='4.00' height='3.34' fill='#777'/><rect x='182.26' y='0.00' width='4.00' height='3.34' fill='#444'/><rect x='174.26' y='9.41' width='4.00' height='3.34' fill='#333'/><rect x='178.26' y='9.41' width='4.00' height='3.34' fill='#1a1a1a'/><rect x='182.26' y='9.41' width='4.00' height='3.34' fill='#444'/><rect x='174.26' y='17.56' width='4.00' height='3.34' fill='#1a1a1a'/><rect x='178.26' y='17.56' width='4.00' height='3.34' fill='#2b2b2b'/><rect x='182.26' y='17.56' width='4.00' height='3.34' fill='#444'/><rect x='174.26' y='6.37' width='3.80' height='3.03' fill='#444'/><rect x='182.26' y='12.75' width='3.80' height='3.03' fill='#222'/><rect x='182.26' y='15.78' width='3.80' height='3.03' fill='#bbb'/></svg>
<svg class='a' style='left:1790px;top:1300px' width='170' height='40' viewBox='0 0 2442 575'>
<g fill='none' stroke='#3c3c3c' stroke-width='48' stroke-linecap='butt'>
<path d='M1237 62 L1237 128'/><path d='M1237 120 C1225 185 1160 232 1072 246'/><path d='M1237 120 C1250 185 1315 232 1400 246'/>
<path d='M1237 258 L1237 372'/><path d='M1050 382 L1420 382'/>
<path d='M1495 72 L1495 348'/><path d='M1637 72 L1637 348'/><path d='M1495 200 L1637 200'/><path d='M1495 325 L1637 325'/>
<path d='M1762 42 L1762 452'/>
<path d='M1852 108 L2072 108'/><path d='M1962 112 C1960 225 1925 300 1855 342'/><path d='M1962 112 C1972 225 2010 290 2080 336'/>
<path d='M2140 42 L2140 452'/><path d='M2140 222 L2228 222'/>
</g></svg>
<div class='a' style='left:0px;top:1530px;width:2610px;height:86px;background:linear-gradient(rgba(0,0,0,0) 0%,rgba(0,0,0,0.02) 35%,rgba(0,0,0,0.055) 70%,rgba(0,0,0,0.1) 100%);pointer-events:none'></div>
<svg class='a' style='left:0;top:1586px' width='30' height='30' viewBox='0 0 30 30'><path d='M0 22 Q6 29 22 30 L0 30 Z' fill='#000'/><path d='M0 22 Q6 29 22 30' fill='none' stroke='#555' stroke-width='1'/></svg>
<svg class='a' style='left:2580px;top:1586px' width='30' height='30' viewBox='0 0 30 30'><path d='M30 22 Q24 29 8 30 L30 30 Z' fill='#000'/><path d='M30 22 Q24 29 8 30' fill='none' stroke='#555' stroke-width='1'/></svg>
</div>
</body></html>
